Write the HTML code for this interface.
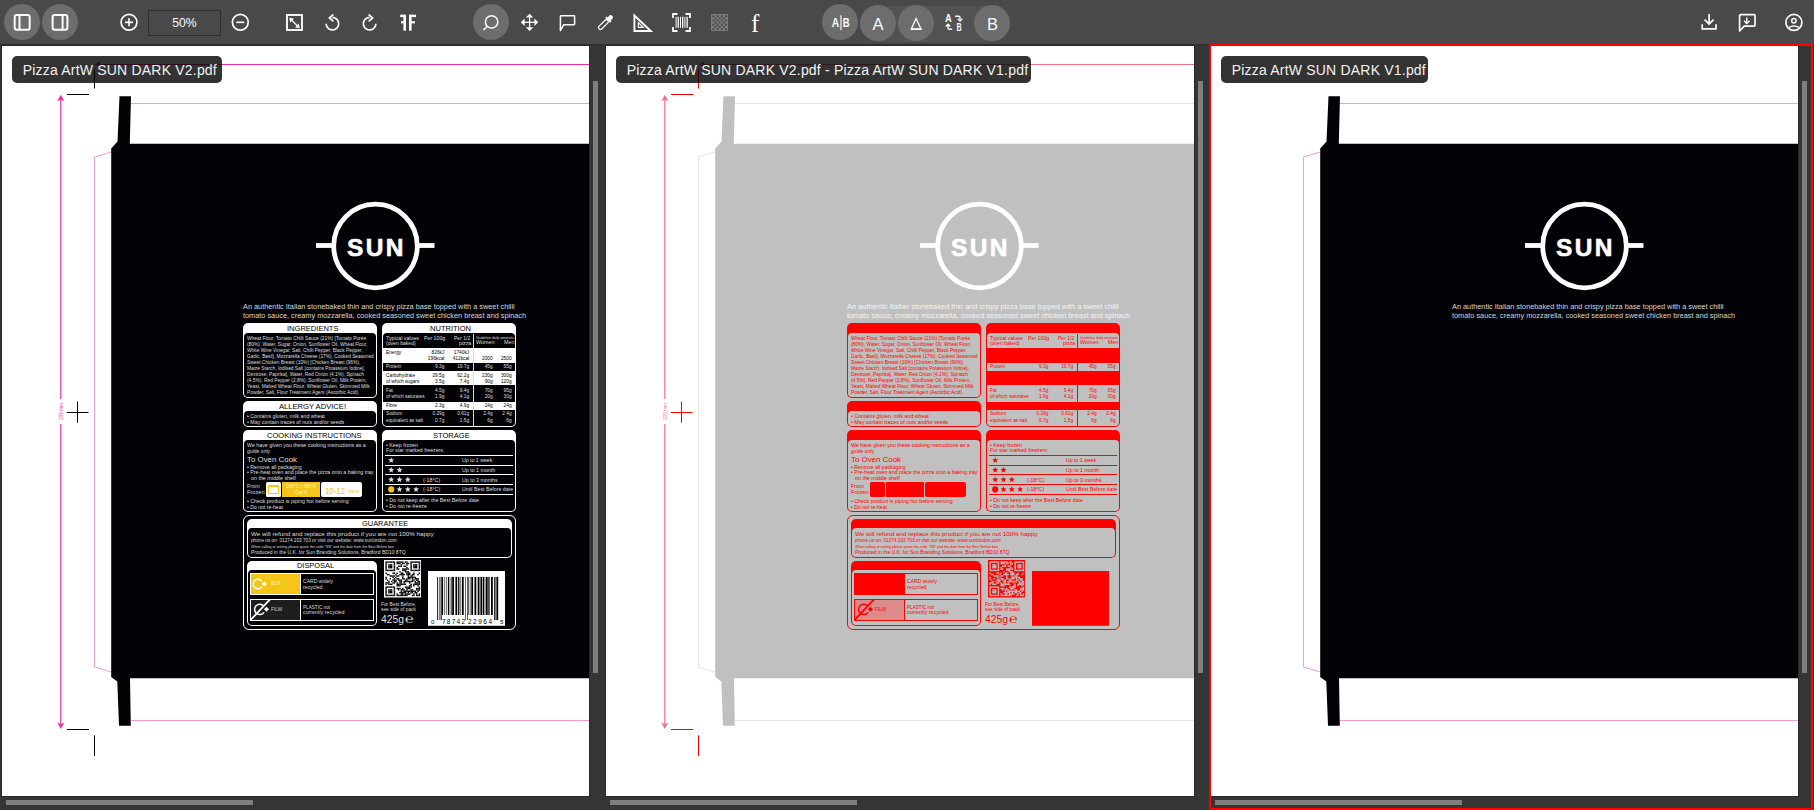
<!DOCTYPE html><html><head><meta charset="utf-8"><style>
*{box-sizing:border-box}
html,body{margin:0;padding:0;width:1814px;height:810px;overflow:hidden;background:#353535;font-family:"Liberation Sans",sans-serif}
div,span,svg{position:absolute}
.t{white-space:nowrap;display:block}
.pg{left:0;top:0}
.panel{background:#fff;overflow:hidden}
.inner{left:-2px;top:-46px;width:620px;height:850px}
.lbl{background:rgba(0,0,0,0.8);border-radius:5px;color:#fff}

</style></head><body>
<svg style="left:0;top:0" width="1814" height="44" viewBox="0 0 1814 44"><rect width="1814" height="44" fill="#494949"/><g fill="#6d6d6d"><circle cx="22" cy="22" r="18"/><circle cx="60" cy="22" r="18"/><circle cx="491" cy="22" r="18"/></g><rect x="860" y="6" width="149.5" height="36" rx="18" fill="#525252"/><g fill="#6d6d6d"><circle cx="840" cy="22" r="18"/><circle cx="878" cy="23" r="18"/><circle cx="916" cy="23" r="18"/><circle cx="992" cy="23" r="18"/></g><g fill="none" stroke="#fbfbfb" stroke-width="2" stroke-linecap="butt"><rect x="14.7" y="15" width="15" height="14.8" rx="2.2"/><line x1="19.5" y1="15" x2="19.5" y2="30"/><rect x="52.6" y="15" width="14.8" height="14.8" rx="2.2"/><line x1="62.6" y1="15" x2="62.6" y2="30"/></g><g fill="none" stroke="#fbfbfb" stroke-width="1.7"><circle cx="129" cy="22.3" r="7.9"/><line x1="125" y1="22.3" x2="133" y2="22.3"/><line x1="129" y1="18.3" x2="129" y2="26.3"/><circle cx="240.3" cy="22.3" r="7.9"/><line x1="236.3" y1="22.3" x2="244.3" y2="22.3"/><rect x="287" y="15" width="15" height="15" stroke-width="1.9"/><line x1="290.5" y1="19" x2="298.5" y2="27" stroke-width="1.4"/></g><g fill="#fbfbfb"><polygon points="289.3,17.8 294,18.6 290.1,22.5"/><polygon points="299.7,28.2 295,27.4 298.9,23.5"/></g><g fill="none" stroke="#fbfbfb" stroke-width="1.7" stroke-linecap="butt"><polyline points="332.40,17.50 333.13,17.54 333.85,17.67 334.55,17.88 335.21,18.18 335.84,18.54 336.43,18.99 336.95,19.49 337.42,20.06 337.81,20.67 338.13,21.33 338.37,22.02 338.52,22.73 338.60,23.46 338.58,24.19 338.48,24.91 338.30,25.62 338.03,26.30 337.69,26.94 337.27,27.54 336.78,28.08 336.24,28.57 335.64,28.99 335.00,29.33 334.32,29.60 333.61,29.78 332.89,29.88 332.16,29.90 331.43,29.82 330.72,29.67 330.03,29.43 329.37,29.11 328.76,28.72 328.19,28.25 327.69,27.73 327.24,27.14 326.88,26.51 326.58,25.85 326.37,25.15 326.24,24.43 326.20,23.70"/><polyline points="333.4,14.5 329.4,17.9 333.4,21.4" stroke-linejoin="miter"/><polyline points="369.60,17.50 368.87,17.54 368.15,17.67 367.45,17.88 366.79,18.18 366.16,18.54 365.57,18.99 365.05,19.49 364.58,20.06 364.19,20.67 363.87,21.33 363.63,22.02 363.48,22.73 363.40,23.46 363.42,24.19 363.52,24.91 363.70,25.62 363.97,26.30 364.31,26.94 364.73,27.54 365.22,28.08 365.76,28.57 366.36,28.99 367.00,29.33 367.68,29.60 368.39,29.78 369.11,29.88 369.84,29.90 370.57,29.82 371.28,29.67 371.97,29.43 372.63,29.11 373.24,28.72 373.81,28.25 374.31,27.73 374.76,27.14 375.12,26.51 375.42,25.85 375.63,25.15 375.76,24.43 375.80,23.70"/><polyline points="368.6,14.5 372.6,17.9 368.6,21.4" stroke-linejoin="miter"/></g><g fill="#fbfbfb"><rect x="403.4" y="14.7" width="2.6" height="16"/><rect x="400.2" y="14.7" width="5" height="2.4"/><rect x="401" y="21.2" width="4" height="2.2"/><rect x="409" y="14.7" width="2.6" height="16"/><rect x="409" y="14.7" width="7" height="2.4"/><rect x="409" y="21.2" width="6" height="2.2"/></g><rect x="148.5" y="10.5" width="72" height="25" fill="none" stroke="#2f2f2f" stroke-width="1"/><text x="184.5" y="26.6" font-family="Liberation Sans" font-size="12.2" fill="#fbfbfb" text-anchor="middle">50%</text><g fill="none" stroke="#fbfbfb" stroke-width="1.5"><circle cx="491.6" cy="21.9" r="6.2"/><line x1="487.2" y1="26.5" x2="483.4" y2="30"/></g><g stroke="#fbfbfb" stroke-width="1.3"><line x1="522" y1="22.3" x2="537" y2="22.3"/><line x1="529.6" y1="15" x2="529.6" y2="30"/></g><g fill="#fbfbfb"><polygon points="529.6,13.8 533.4,17.6 525.8,17.6"/><polygon points="529.6,31 533.4,27.2 525.8,27.2"/><polygon points="520.8,22.3 524.6,18.5 524.6,26.1"/><polygon points="538.2,22.3 534.4,18.5 534.4,26.1"/></g><path d="M560.4,30.6 L560.4,16.5 Q560.4,15.8 561.1,15.8 L574,15.8 Q574.6,15.8 574.6,16.5 L574.6,24 Q574.6,24.7 574,24.7 L563.8,24.7 Z" fill="none" stroke="#fbfbfb" stroke-width="1.5" stroke-linejoin="round"/><g transform="translate(605.5,22.5) rotate(45)"><rect x="-1.9" y="-3" width="3.8" height="12" rx="1.6" fill="none" stroke="#fbfbfb" stroke-width="1.3"/><rect x="-3.4" y="-5.2" width="6.8" height="2.2" fill="#fbfbfb"/><rect x="-2.3" y="-9.5" width="4.6" height="5" rx="2.2" fill="#fbfbfb"/></g><g fill="none" stroke="#fbfbfb" stroke-width="1.9" stroke-linejoin="miter"><polygon points="634.4,15.5 634.4,31 650.8,31"/><polygon points="638.4,22.6 638.4,27.4 643.2,27.4" stroke-width="1.2"/></g><g fill="none" stroke="#fbfbfb" stroke-width="1.8"><polyline points="673,18 673,14 677.5,14"/><polyline points="685.5,14 690,14 690,18"/><polyline points="673,27 673,31 677.5,31"/><polyline points="685.5,31 690,31 690,27"/></g><g fill="#fbfbfb"><rect x="675.6" y="16.8" width="1" height="11"/><rect x="677.6" y="16.8" width="1.3" height="11"/><rect x="680" y="16.8" width="1" height="11"/><rect x="682" y="16.8" width="1.3" height="11"/><rect x="684.4" y="16.8" width="1" height="11"/><rect x="686.5" y="16.8" width="1.3" height="11"/></g><rect x="711" y="14" width="17" height="17" fill="#7b7b7b"/><g fill="#4a4a4a"><rect x="712.30" y="15.30" width="2.1" height="2.1" rx="0.8"/><rect x="716.50" y="15.30" width="2.1" height="2.1" rx="0.8"/><rect x="720.70" y="15.30" width="2.1" height="2.1" rx="0.8"/><rect x="724.90" y="15.30" width="2.1" height="2.1" rx="0.8"/><rect x="714.40" y="17.40" width="2.1" height="2.1" rx="0.8"/><rect x="718.60" y="17.40" width="2.1" height="2.1" rx="0.8"/><rect x="722.80" y="17.40" width="2.1" height="2.1" rx="0.8"/><rect x="712.30" y="19.50" width="2.1" height="2.1" rx="0.8"/><rect x="716.50" y="19.50" width="2.1" height="2.1" rx="0.8"/><rect x="720.70" y="19.50" width="2.1" height="2.1" rx="0.8"/><rect x="724.90" y="19.50" width="2.1" height="2.1" rx="0.8"/><rect x="714.40" y="21.60" width="2.1" height="2.1" rx="0.8"/><rect x="718.60" y="21.60" width="2.1" height="2.1" rx="0.8"/><rect x="722.80" y="21.60" width="2.1" height="2.1" rx="0.8"/><rect x="712.30" y="23.70" width="2.1" height="2.1" rx="0.8"/><rect x="716.50" y="23.70" width="2.1" height="2.1" rx="0.8"/><rect x="720.70" y="23.70" width="2.1" height="2.1" rx="0.8"/><rect x="724.90" y="23.70" width="2.1" height="2.1" rx="0.8"/><rect x="714.40" y="25.80" width="2.1" height="2.1" rx="0.8"/><rect x="718.60" y="25.80" width="2.1" height="2.1" rx="0.8"/><rect x="722.80" y="25.80" width="2.1" height="2.1" rx="0.8"/><rect x="712.30" y="27.90" width="2.1" height="2.1" rx="0.8"/><rect x="716.50" y="27.90" width="2.1" height="2.1" rx="0.8"/><rect x="720.70" y="27.90" width="2.1" height="2.1" rx="0.8"/><rect x="724.90" y="27.90" width="2.1" height="2.1" rx="0.8"/></g><text x="751" y="31.5" font-family="Liberation Serif" font-size="25" fill="#fbfbfb">f</text><text x="0" y="0" transform="translate(831.8,27.2) scale(0.82,1)" font-family="Liberation Sans" font-size="12.6" font-weight="bold" fill="#fbfbfb">A</text><rect x="840.4" y="15.2" width="1.1" height="15" fill="#fbfbfb"/><text x="0" y="0" transform="translate(842.8,27.2) scale(0.75,1)" font-family="Liberation Sans" font-size="12.6" font-weight="bold" fill="#fbfbfb">B</text><text x="878" y="29.8" font-family="Liberation Sans" font-size="16.5" fill="#fbfbfb" text-anchor="middle">A</text><polygon points="916.1,18.6 921,29.1 911.2,29.1" fill="none" stroke="#fbfbfb" stroke-width="1.3"/><line x1="911" y1="29.1" x2="921.3" y2="29.1" stroke="#fbfbfb" stroke-width="1.6"/><text x="992.5" y="29.8" font-family="Liberation Sans" font-size="16.5" fill="#fbfbfb" text-anchor="middle">B</text><text x="0" y="0" transform="translate(945,21.9) scale(0.85,1)" font-family="Liberation Sans" font-size="11" font-weight="bold" fill="#fbfbfb">A</text><text x="0" y="0" transform="translate(956.4,31) scale(0.72,1)" font-family="Liberation Sans" font-size="10" font-weight="bold" fill="#fbfbfb">B</text><g fill="none" stroke="#fbfbfb" stroke-width="1.4"><path d="M955,16.2 L958.8,16.2 Q960,16.2 960,17.5 L960,19.5"/><path d="M952.2,29.2 L949.2,29.2 Q948,29.2 948,28 L948,26"/></g><g fill="none" stroke="#fbfbfb" stroke-width="1.4"><polyline points="957.7,18.8 960,21.1 962.3,18.8"/><polyline points="945.7,26.5 948,24.2 950.3,26.5"/></g><g fill="none" stroke="#fbfbfb" stroke-width="1.7"><polyline points="1702.2,24.3 1702.2,28.8 1716,28.8 1716,24.3"/><line x1="1709.1" y1="14" x2="1709.1" y2="24"/><polyline points="1704.6,19.6 1709.1,24.1 1713.6,19.6"/><path d="M1739.6,31 L1739.6,15.5 Q1739.6,14.6 1740.5,14.6 L1754.2,14.6 Q1755,14.6 1755,15.5 L1755,25.2 Q1755,26.1 1754.2,26.1 L1744.2,26.1 Z" stroke-linejoin="round"/><line x1="1746.8" y1="17.6" x2="1746.8" y2="23.4" stroke-width="1.4"/><polyline points="1744,20.8 1746.8,23.6 1749.6,20.8" stroke-width="1.4"/><circle cx="1793.9" cy="22.4" r="8"/><circle cx="1793.9" cy="20.8" r="2.2" stroke-width="1.5"/><path d="M1789,27.4 Q1793.9,24.5 1798.8,27.4" stroke-width="1.5"/></g></svg>
<div style="left:0.00px;top:44.00px;width:1814.00px;height:1.00px;background:#2f2f2f"></div>
<div class="panel" style="left:2px;top:46px;width:587px;height:750px;box-shadow:0 0 0 1px #2a2a2a">
<div class="inner">
<svg class="pg" width="620" height="800" viewBox="0 0 620 800"><g fill="none" stroke="#f39ad3" stroke-width="1"><polyline points="111.3,152 94.5,157 94.5,667 111.3,672"/><line x1="131" y1="103.5" x2="620" y2="103.5"/><line x1="130.5" y1="720.5" x2="620" y2="720.5"/></g><polygon fill="#020207" points="119.5,96.3 131,96.3 129.8,143.8 620,143.8 620,678.2 130,678.2 130.8,725.8 119,725.8 117.3,681.5 111.2,677 111.2,148.5 117.5,141.5"/><g stroke="#f22e9e" stroke-width="1.2" fill="none"><line x1="97" y1="64.5" x2="620" y2="64.5"/><line x1="60.8" y1="98" x2="60.8" y2="399"/><line x1="60.8" y1="424" x2="60.8" y2="725"/></g><g fill="#f22e9e"><polygon points="60.8,94.8 57.2,101.2 60.8,99.6 64.4,101.2"/><polygon points="60.8,729 57.2,722.6 60.8,724.2 64.4,722.6"/><polygon points="94.5,64.5 100,61.5 100,67.5"/></g><text x="0" y="0" transform="translate(63,411.5) rotate(-90)" font-family="Liberation Sans" font-size="4.5" fill="#f22e9e" text-anchor="middle">226 mm</text><g stroke="#000" stroke-width="1.05" fill="none"><line x1="67" y1="94.5" x2="89" y2="94.5"/><line x1="94.5" y1="69.5" x2="94.5" y2="88.5"/><line x1="67" y1="729.5" x2="89" y2="729.5"/><line x1="94.5" y1="735.3" x2="94.5" y2="756"/><line x1="67" y1="412.5" x2="88.5" y2="412.5"/><line x1="77.5" y1="401.5" x2="77.5" y2="422.8"/></g><g stroke="#fff" fill="none" stroke-width="4.8"><circle cx="375.5" cy="246" r="41.8"/><line x1="316" y1="245.5" x2="333.5" y2="245.5"/><line x1="417.5" y1="245.5" x2="434.5" y2="245.5"/></g></svg><div style="left:243.00px;top:323.30px;width:134.00px;height:74.50px;background:#fff;border-radius:5px"></div><div style="left:244.10px;top:333.40px;width:131.80px;height:63.30px;background:#020207;border-radius:4px"></div><span class="t" style="left:286.50px;top:325.03px;font-size:8px;line-height:8px;color:#000;transform:scaleX(0.9420);transform-origin:0 0;">INGREDIENTS</span><span class="t" style="left:247.00px;top:335.80px;font-size:5.2px;line-height:5.2px;color:#dedede;transform:scaleX(0.9375);transform-origin:0 0;">Wheat Flour, Tomato Chilli Sauce (21%) [Tomato Purée</span><span class="t" style="left:247.00px;top:341.79px;font-size:5.2px;line-height:5.2px;color:#dedede;transform:scaleX(0.9316);transform-origin:0 0;">(80%), Water, Sugar, Onion, Sunflower Oil, Wheat Flour,</span><span class="t" style="left:247.00px;top:347.78px;font-size:5.2px;line-height:5.2px;color:#dedede;transform:scaleX(0.9311);transform-origin:0 0;">White Wine Vinegar, Salt, Chilli Pepper, Black Pepper,</span><span class="t" style="left:247.00px;top:353.77px;font-size:5.2px;line-height:5.2px;color:#dedede;transform:scaleX(0.9232);transform-origin:0 0;">Garlic, Basil], Mozzarella Cheese (17%), Cooked Seasoned</span><span class="t" style="left:247.00px;top:359.76px;font-size:5.2px;line-height:5.2px;color:#dedede;transform:scaleX(0.9351);transform-origin:0 0;">Sweet Chicken Breast (10%) [Chicken Breast (96%),</span><span class="t" style="left:247.00px;top:365.75px;font-size:5.2px;line-height:5.2px;color:#dedede;transform:scaleX(0.9324);transform-origin:0 0;">Maize Starch, Iodised Salt [contains Potassium Iodine],</span><span class="t" style="left:247.00px;top:371.74px;font-size:5.2px;line-height:5.2px;color:#dedede;transform:scaleX(0.9358);transform-origin:0 0;">Dextrose, Paprika], Water, Red Onion (4.1%), Spinach</span><span class="t" style="left:247.00px;top:377.73px;font-size:5.2px;line-height:5.2px;color:#dedede;transform:scaleX(0.9373);transform-origin:0 0;">(4.5%), Red Pepper (2.8%), Sunflower Oil, Milk Protein,</span><span class="t" style="left:247.00px;top:383.72px;font-size:5.2px;line-height:5.2px;color:#dedede;transform:scaleX(0.9409);transform-origin:0 0;">Yeast, Malted Wheat Flour, Wheat Gluten, Skimmed Milk</span><span class="t" style="left:247.00px;top:389.71px;font-size:5.2px;line-height:5.2px;color:#dedede;transform:scaleX(0.9307);transform-origin:0 0;">Powder, Salt, Flour Treatment Agent (Ascorbic Acid).</span><div style="left:243.00px;top:401.30px;width:134.00px;height:25.70px;background:#fff;border-radius:5px"></div><div style="left:244.10px;top:411.00px;width:131.80px;height:14.90px;background:#020207;border-radius:4px"></div><span class="t" style="left:279.00px;top:402.53px;font-size:8px;line-height:8px;color:#000;transform:scaleX(0.9497);transform-origin:0 0;">ALLERGY ADVICE!</span><span class="t" style="left:247.00px;top:413.70px;font-size:5.2px;line-height:5.2px;color:#dedede;transform:scaleX(1.0134);transform-origin:0 0;">• Contains gluten, milk and wheat</span><span class="t" style="left:247.00px;top:419.60px;font-size:5.2px;line-height:5.2px;color:#dedede;transform:scaleX(1.0213);transform-origin:0 0;">• May contain traces of nuts and/or seeds</span><div style="left:381.80px;top:323.30px;width:134.20px;height:103.70px;background:#fff;border-radius:5px"></div><div style="left:382.90px;top:333.40px;width:132.00px;height:92.50px;background:#020207;border-radius:4px"></div><span class="t" style="left:429.70px;top:325.03px;font-size:8px;line-height:8px;color:#000;transform:scaleX(0.9414);transform-origin:0 0;">NUTRITION</span><div style="left:382.90px;top:347.80px;width:132.00px;height:14.80px;background:#fff"></div><div style="left:382.90px;top:371.00px;width:132.00px;height:14.30px;background:#fff"></div><div style="left:382.90px;top:402.00px;width:132.00px;height:8.00px;background:#fff"></div><div style="left:473.20px;top:334.00px;width:0.90px;height:92.00px;background:#d8dcc0"></div><span class="t" style="left:386.00px;top:336.54px;font-size:4.8px;line-height:4.8px;color:#dedede;transform:scaleX(1.0947);transform-origin:0 0;">Typical values</span><span class="t" style="left:386.00px;top:341.74px;font-size:4.8px;line-height:4.8px;color:#dedede;transform:scaleX(1.0602);transform-origin:0 0;">(oven baked)</span><span class="t" style="left:423.60px;top:336.54px;font-size:4.8px;line-height:4.8px;color:#dedede;transform:scaleX(1.0883);transform-origin:0 0;">Per 100g</span><span class="t" style="left:453.70px;top:336.54px;font-size:4.8px;line-height:4.8px;color:#dedede;transform:scaleX(1.0533);transform-origin:0 0;">Per 1/2</span><span class="t" style="left:458.50px;top:341.74px;font-size:4.8px;line-height:4.8px;color:#dedede;transform:scaleX(1.0977);transform-origin:0 0;">pizza</span><span class="t" style="left:476.40px;top:337.26px;font-size:3px;line-height:3px;color:#dedede;transform:scaleX(1.1869);transform-origin:0 0;">Guideline daily amounts</span><span class="t" style="left:476.40px;top:340.54px;font-size:4.8px;line-height:4.8px;color:#dedede;transform:scaleX(1.1186);transform-origin:0 0;">Women</span><span class="t" style="left:503.60px;top:340.54px;font-size:4.8px;line-height:4.8px;color:#dedede;transform:scaleX(1.1139);transform-origin:0 0;">Men</span><span class="t" style="left:386.00px;top:350.94px;font-size:4.8px;line-height:4.8px;color:#000;">Energy</span><span class="t" style="left:431.59px;top:350.94px;font-size:4.8px;line-height:4.8px;color:#000;">826kJ</span><span class="t" style="left:453.72px;top:350.94px;font-size:4.8px;line-height:4.8px;color:#000;">1740kJ</span><span class="t" style="left:427.86px;top:356.54px;font-size:4.8px;line-height:4.8px;color:#000;">196kcal</span><span class="t" style="left:452.66px;top:356.54px;font-size:4.8px;line-height:4.8px;color:#000;">412kcal</span><span class="t" style="left:482.02px;top:356.54px;font-size:4.8px;line-height:4.8px;color:#000;">2000</span><span class="t" style="left:500.92px;top:356.54px;font-size:4.8px;line-height:4.8px;color:#000;">2500</span><span class="t" style="left:386.00px;top:365.34px;font-size:4.8px;line-height:4.8px;color:#dedede;">Protein</span><span class="t" style="left:435.06px;top:365.34px;font-size:4.8px;line-height:4.8px;color:#dedede;">9.3g</span><span class="t" style="left:457.19px;top:365.34px;font-size:4.8px;line-height:4.8px;color:#dedede;">19.7g</span><span class="t" style="left:484.69px;top:365.34px;font-size:4.8px;line-height:4.8px;color:#dedede;">45g</span><span class="t" style="left:503.59px;top:365.34px;font-size:4.8px;line-height:4.8px;color:#dedede;">55g</span><span class="t" style="left:386.00px;top:374.04px;font-size:4.8px;line-height:4.8px;color:#000;">Carbohydrate</span><span class="t" style="left:432.39px;top:374.04px;font-size:4.8px;line-height:4.8px;color:#000;">29.5g</span><span class="t" style="left:457.19px;top:374.04px;font-size:4.8px;line-height:4.8px;color:#000;">62.2g</span><span class="t" style="left:482.02px;top:374.04px;font-size:4.8px;line-height:4.8px;color:#000;">230g</span><span class="t" style="left:500.92px;top:374.04px;font-size:4.8px;line-height:4.8px;color:#000;">300g</span><span class="t" style="left:386.00px;top:379.74px;font-size:4.8px;line-height:4.8px;color:#000;">of which sugars</span><span class="t" style="left:435.06px;top:379.74px;font-size:4.8px;line-height:4.8px;color:#000;">3.5g</span><span class="t" style="left:459.86px;top:379.74px;font-size:4.8px;line-height:4.8px;color:#000;">7.4g</span><span class="t" style="left:484.69px;top:379.74px;font-size:4.8px;line-height:4.8px;color:#000;">90g</span><span class="t" style="left:500.92px;top:379.74px;font-size:4.8px;line-height:4.8px;color:#000;">120g</span><span class="t" style="left:386.00px;top:389.24px;font-size:4.8px;line-height:4.8px;color:#dedede;">Fat</span><span class="t" style="left:435.06px;top:389.24px;font-size:4.8px;line-height:4.8px;color:#dedede;">4.5g</span><span class="t" style="left:459.86px;top:389.24px;font-size:4.8px;line-height:4.8px;color:#dedede;">9.4g</span><span class="t" style="left:484.69px;top:389.24px;font-size:4.8px;line-height:4.8px;color:#dedede;">70g</span><span class="t" style="left:503.59px;top:389.24px;font-size:4.8px;line-height:4.8px;color:#dedede;">95g</span><span class="t" style="left:386.00px;top:395.24px;font-size:4.8px;line-height:4.8px;color:#dedede;">of which saturates</span><span class="t" style="left:435.06px;top:395.24px;font-size:4.8px;line-height:4.8px;color:#dedede;">1.9g</span><span class="t" style="left:459.86px;top:395.24px;font-size:4.8px;line-height:4.8px;color:#dedede;">4.1g</span><span class="t" style="left:484.69px;top:395.24px;font-size:4.8px;line-height:4.8px;color:#dedede;">20g</span><span class="t" style="left:503.59px;top:395.24px;font-size:4.8px;line-height:4.8px;color:#dedede;">30g</span><span class="t" style="left:386.00px;top:404.14px;font-size:4.8px;line-height:4.8px;color:#000;">Fibre</span><span class="t" style="left:435.06px;top:404.14px;font-size:4.8px;line-height:4.8px;color:#000;">2.3g</span><span class="t" style="left:459.86px;top:404.14px;font-size:4.8px;line-height:4.8px;color:#000;">4.9g</span><span class="t" style="left:484.69px;top:404.14px;font-size:4.8px;line-height:4.8px;color:#000;">24g</span><span class="t" style="left:503.59px;top:404.14px;font-size:4.8px;line-height:4.8px;color:#000;">24g</span><span class="t" style="left:386.00px;top:412.44px;font-size:4.8px;line-height:4.8px;color:#dedede;">Sodium</span><span class="t" style="left:432.39px;top:412.44px;font-size:4.8px;line-height:4.8px;color:#dedede;">0.29g</span><span class="t" style="left:457.19px;top:412.44px;font-size:4.8px;line-height:4.8px;color:#dedede;">0.61g</span><span class="t" style="left:483.36px;top:412.44px;font-size:4.8px;line-height:4.8px;color:#dedede;">2.4g</span><span class="t" style="left:502.26px;top:412.44px;font-size:4.8px;line-height:4.8px;color:#dedede;">2.4g</span><span class="t" style="left:386.00px;top:418.54px;font-size:4.8px;line-height:4.8px;color:#dedede;">equivalent as salt</span><span class="t" style="left:435.06px;top:418.54px;font-size:4.8px;line-height:4.8px;color:#dedede;">0.7g</span><span class="t" style="left:459.86px;top:418.54px;font-size:4.8px;line-height:4.8px;color:#dedede;">1.5g</span><span class="t" style="left:487.36px;top:418.54px;font-size:4.8px;line-height:4.8px;color:#dedede;">6g</span><span class="t" style="left:506.26px;top:418.54px;font-size:4.8px;line-height:4.8px;color:#dedede;">6g</span><div style="left:243.00px;top:430.30px;width:134.00px;height:81.70px;background:#fff;border-radius:5px"></div><div style="left:244.10px;top:440.20px;width:131.80px;height:70.70px;background:#020207;border-radius:4px"></div><span class="t" style="left:266.70px;top:431.53px;font-size:8px;line-height:8px;color:#000;transform:scaleX(0.9460);transform-origin:0 0;">COOKING INSTRUCTIONS</span><span class="t" style="left:247.00px;top:443.00px;font-size:5.2px;line-height:5.2px;color:#dedede;transform:scaleX(1.0199);transform-origin:0 0;">We have given you these cooking instructions as a</span><span class="t" style="left:247.00px;top:448.90px;font-size:5.2px;line-height:5.2px;color:#dedede;transform:scaleX(0.9787);transform-origin:0 0;">guide only</span><span class="t" style="left:247.00px;top:456.47px;font-size:7.6px;line-height:7.6px;color:#dedede;transform:scaleX(1.0383);transform-origin:0 0;">To Oven Cook</span><span class="t" style="left:247.00px;top:464.60px;font-size:5.2px;line-height:5.2px;color:#dedede;transform:scaleX(1.0069);transform-origin:0 0;">• Remove all packaging</span><span class="t" style="left:247.00px;top:470.30px;font-size:5.2px;line-height:5.2px;color:#dedede;transform:scaleX(1.0147);transform-origin:0 0;">• Pre-heat oven and place the pizza onto a baking tray</span><span class="t" style="left:251.00px;top:476.10px;font-size:5.2px;line-height:5.2px;color:#dedede;transform:scaleX(1.0264);transform-origin:0 0;">on the middle shelf</span><span class="t" style="left:247.00px;top:484.10px;font-size:5.2px;line-height:5.2px;color:#dedede;transform:scaleX(1.0552);transform-origin:0 0;">From</span><span class="t" style="left:247.00px;top:490.10px;font-size:5.2px;line-height:5.2px;color:#dedede;transform:scaleX(1.0876);transform-origin:0 0;">Frozen</span><div style="left:266.00px;top:481.80px;width:14.60px;height:14.80px;background:#fff;border-radius:1.5px"></div><div style="left:267.60px;top:484.60px;width:11.60px;height:9.40px;border:1.7px solid #f6c51a;border-top-width:2.4px;border-radius:1px"></div><div style="left:282.00px;top:481.80px;width:37.70px;height:14.80px;background:#f6c51a"></div><span class="t" style="left:285.80px;top:485.21px;font-size:4.6px;line-height:4.6px;color:#fff3c0;transform:scaleX(1.0348);transform-origin:0 0;">200°C / 180°F</span><span class="t" style="left:294.80px;top:491.21px;font-size:4.6px;line-height:4.6px;color:#fff3c0;transform:scaleX(0.9778);transform-origin:0 0;">Gas 6</span><div style="left:321.30px;top:481.80px;width:40.80px;height:14.80px;background:#fff;border-radius:2px"></div><span class="t" style="left:324.50px;top:486.06px;font-size:9.5px;line-height:9.5px;color:#f6c51a;transform:scaleX(0.8232);transform-origin:0 0;">10-12</span><span class="t" style="left:347.50px;top:490.21px;font-size:4.6px;line-height:4.6px;color:#f6c51a;transform:scaleX(1.1326);transform-origin:0 0;">mins</span><span class="t" style="left:247.00px;top:498.90px;font-size:5.2px;line-height:5.2px;color:#dedede;transform:scaleX(1.0141);transform-origin:0 0;">• Check product is piping hot before serving</span><span class="t" style="left:247.00px;top:504.90px;font-size:5.2px;line-height:5.2px;color:#dedede;transform:scaleX(0.9862);transform-origin:0 0;">• Do not re-heat</span><div style="left:381.80px;top:430.30px;width:134.20px;height:81.70px;background:#fff;border-radius:5px"></div><div style="left:382.90px;top:440.20px;width:132.00px;height:70.70px;background:#020207;border-radius:4px"></div><span class="t" style="left:433.00px;top:431.53px;font-size:8px;line-height:8px;color:#000;transform:scaleX(0.9417);transform-origin:0 0;">STORAGE</span><span class="t" style="left:386.10px;top:443.00px;font-size:5.2px;line-height:5.2px;color:#dedede;transform:scaleX(1.0222);transform-origin:0 0;">• Keep frozen</span><span class="t" style="left:386.10px;top:448.40px;font-size:5.2px;line-height:5.2px;color:#dedede;">For star marked freezers:</span><div style="left:385.30px;top:454.90px;width:127.70px;height:0.90px;background:#fff"></div><div style="left:385.30px;top:464.50px;width:127.70px;height:0.90px;background:#fff"></div><div style="left:385.30px;top:474.40px;width:127.70px;height:0.90px;background:#fff"></div><div style="left:385.30px;top:484.00px;width:127.70px;height:0.90px;background:#fff"></div><div style="left:385.30px;top:494.00px;width:127.70px;height:0.90px;background:#fff"></div><svg style="left:380px;top:440px" width="40" height="60" viewBox="0 0 40 60"><g fill="#dedede"><polygon points="11.20,17.20 12.02,19.17 14.15,19.34 12.53,20.73 13.02,22.81 11.20,21.70 9.38,22.81 9.87,20.73 8.25,19.34 10.38,19.17"/><polygon points="11.20,26.90 12.02,28.87 14.15,29.04 12.53,30.43 13.02,32.51 11.20,31.39 9.38,32.51 9.87,30.43 8.25,29.04 10.38,28.87"/><polygon points="19.50,26.90 20.32,28.87 22.45,29.04 20.83,30.43 21.32,32.51 19.50,31.39 17.68,32.51 18.17,30.43 16.55,29.04 18.68,28.87"/><polygon points="11.20,36.60 12.02,38.57 14.15,38.74 12.53,40.13 13.02,42.21 11.20,41.09 9.38,42.21 9.87,40.13 8.25,38.74 10.38,38.57"/><polygon points="19.50,36.60 20.32,38.57 22.45,38.74 20.83,40.13 21.32,42.21 19.50,41.09 17.68,42.21 18.17,40.13 16.55,38.74 18.68,38.57"/><polygon points="27.80,36.60 28.62,38.57 30.75,38.74 29.13,40.13 29.62,42.21 27.80,41.09 25.98,42.21 26.47,40.13 24.85,38.74 26.98,38.57"/><polygon points="19.50,46.30 20.32,48.27 22.45,48.44 20.83,49.83 21.32,51.91 19.50,50.80 17.68,51.91 18.17,49.83 16.55,48.44 18.68,48.27"/><polygon points="27.80,46.30 28.62,48.27 30.75,48.44 29.13,49.83 29.62,51.91 27.80,50.80 25.98,51.91 26.47,49.83 24.85,48.44 26.98,48.27"/><polygon points="36.10,46.30 36.92,48.27 39.05,48.44 37.43,49.83 37.92,51.91 36.10,50.80 34.28,51.91 34.77,49.83 33.15,48.44 35.28,48.27"/></g><circle cx="11.199999999999989" cy="49.400000000000034" r="3.1" fill="#f6c51a"/></svg><span class="t" style="left:462.00px;top:458.20px;font-size:5.2px;line-height:5.2px;color:#dedede;">Up to 1 week</span><span class="t" style="left:462.00px;top:468.00px;font-size:5.2px;line-height:5.2px;color:#dedede;transform:scaleX(1.0196);transform-origin:0 0;">Up to 1 month</span><span class="t" style="left:422.80px;top:477.70px;font-size:5.2px;line-height:5.2px;color:#dedede;transform:scaleX(1.0231);transform-origin:0 0;">(-18°C)</span><span class="t" style="left:462.00px;top:477.70px;font-size:5.2px;line-height:5.2px;color:#dedede;transform:scaleX(1.0125);transform-origin:0 0;">Up to 3 months</span><span class="t" style="left:422.80px;top:487.30px;font-size:5.2px;line-height:5.2px;color:#dedede;transform:scaleX(1.0231);transform-origin:0 0;">(-18°C)</span><span class="t" style="left:462.00px;top:487.30px;font-size:5.2px;line-height:5.2px;color:#dedede;transform:scaleX(1.0122);transform-origin:0 0;">Until Best Before date</span><span class="t" style="left:386.10px;top:498.10px;font-size:5.2px;line-height:5.2px;color:#dedede;transform:scaleX(1.0130);transform-origin:0 0;">• Do not keep after the Best Before date</span><span class="t" style="left:386.10px;top:504.10px;font-size:5.2px;line-height:5.2px;color:#dedede;">• Do not re-freeze</span><div style="left:243.00px;top:515.00px;width:273.00px;height:115.00px;border:1.1px solid #fff;border-radius:6px"></div><div style="left:247.00px;top:518.80px;width:265.00px;height:39.20px;background:#fff;border-radius:5px"></div><div style="left:248.10px;top:528.40px;width:262.80px;height:28.50px;background:#020207;border-radius:4px"></div><span class="t" style="left:361.90px;top:519.73px;font-size:8px;line-height:8px;color:#000;transform:scaleX(0.9300);transform-origin:0 0;">GUARANTEE</span><span class="t" style="left:251.00px;top:531.15px;font-size:6.2px;line-height:6.2px;color:#dedede;transform:scaleX(1.0140);transform-origin:0 0;">We will refund and replace this product if you are not 100% happy</span><span class="t" style="left:251.00px;top:538.91px;font-size:4.6px;line-height:4.6px;color:#dedede;transform:scaleX(1.0219);transform-origin:0 0;">phone us on: 01274 203 703 or visit our website: www.sunlondon.com</span><span class="t" style="left:251.00px;top:545.53px;font-size:2.8px;line-height:2.8px;color:#dedede;transform:scaleX(1.2855);transform-origin:0 0;">When calling or writing please quote the code &quot;SN&quot; and the date from the Best Before box</span><span class="t" style="left:251.00px;top:550.40px;font-size:5.2px;line-height:5.2px;color:#dedede;transform:scaleX(0.9680);transform-origin:0 0;">Produced in the U.K. for Sun Branding Solutions, Bradford BD10 8TQ</span><div style="left:247.00px;top:560.80px;width:130.00px;height:65.20px;background:#fff;border-radius:5px"></div><div style="left:248.10px;top:570.40px;width:127.80px;height:54.50px;background:#020207;border-radius:4px"></div><span class="t" style="left:296.90px;top:562.43px;font-size:8px;line-height:8px;color:#000;transform:scaleX(0.9246);transform-origin:0 0;">DISPOSAL</span><div style="left:249.90px;top:573.00px;width:123.90px;height:21.70px;border:1.1px solid #fff;border-radius:0px"></div><div style="left:250.50px;top:573.60px;width:50.40px;height:20.50px;background:#f6c51a"></div><div style="left:300.40px;top:573.60px;width:1.00px;height:20.50px;background:#fff"></div><div style="left:249.90px;top:599.20px;width:123.90px;height:21.40px;border:1.1px solid #fff;border-radius:0px"></div><div style="left:250.50px;top:599.80px;width:50.40px;height:20.20px;background:#1e1e1e"></div><div style="left:300.40px;top:599.80px;width:1.00px;height:20.20px;background:#fff"></div><svg style="left:250px;top:573px" width="52" height="48" viewBox="0 0 52 48"><path d="M11.68,7.91 A4.8,4.8 0 1 0 11.93,13.75" fill="none" stroke="#fff" stroke-width="1.5"/><rect x="12.50" y="9.10" width="3.6" height="3.6" transform="rotate(45 14.30 10.90)" fill="#fff"/><path d="M13.78,33.06 A5.2,5.2 0 1 0 14.06,39.38" fill="none" stroke="#fff" stroke-width="1.5"/><rect x="14.70" y="34.50" width="3.6" height="3.6" transform="rotate(45 16.50 36.30)" fill="#fff"/><line x1="0.6" y1="47" x2="20" y2="26.3" stroke="#fff" stroke-width="1.8"/></svg><span class="t" style="left:271.00px;top:582.21px;font-size:4.6px;line-height:4.6px;color:#fff3c0;transform:scaleX(0.9779);transform-origin:0 0;">BOX</span><span class="t" style="left:271.00px;top:608.21px;font-size:4.6px;line-height:4.6px;color:#d0d0d0;transform:scaleX(1.0499);transform-origin:0 0;">FILM</span><span class="t" style="left:303.00px;top:579.27px;font-size:5px;line-height:5px;color:#dedede;transform:scaleX(1.0186);transform-origin:0 0;">CARD widely</span><span class="t" style="left:303.00px;top:584.87px;font-size:5px;line-height:5px;color:#dedede;transform:scaleX(1.0474);transform-origin:0 0;">recycled</span><span class="t" style="left:303.00px;top:604.87px;font-size:5px;line-height:5px;color:#dedede;transform:scaleX(0.9253);transform-origin:0 0;">PLASTIC not</span><span class="t" style="left:303.00px;top:610.47px;font-size:5px;line-height:5px;color:#dedede;transform:scaleX(1.0593);transform-origin:0 0;">currently recycled</span><svg style="left:383.7px;top:560.4px" width="37.5" height="37.5" viewBox="0 0 37.5 37.5"><rect width="37.5" height="37.5" fill="#fff"/><g fill="#000"><rect x="1.39" y="1.39" width="1.44" height="1.44"/><rect x="2.78" y="1.39" width="1.44" height="1.44"/><rect x="4.17" y="1.39" width="1.44" height="1.44"/><rect x="5.56" y="1.39" width="1.44" height="1.44"/><rect x="6.94" y="1.39" width="1.44" height="1.44"/><rect x="8.33" y="1.39" width="1.44" height="1.44"/><rect x="9.72" y="1.39" width="1.44" height="1.44"/><rect x="12.50" y="1.39" width="1.44" height="1.44"/><rect x="13.89" y="1.39" width="1.44" height="1.44"/><rect x="15.28" y="1.39" width="1.44" height="1.44"/><rect x="16.67" y="1.39" width="1.44" height="1.44"/><rect x="18.06" y="1.39" width="1.44" height="1.44"/><rect x="20.83" y="1.39" width="1.44" height="1.44"/><rect x="22.22" y="1.39" width="1.44" height="1.44"/><rect x="26.39" y="1.39" width="1.44" height="1.44"/><rect x="27.78" y="1.39" width="1.44" height="1.44"/><rect x="29.17" y="1.39" width="1.44" height="1.44"/><rect x="30.56" y="1.39" width="1.44" height="1.44"/><rect x="31.94" y="1.39" width="1.44" height="1.44"/><rect x="33.33" y="1.39" width="1.44" height="1.44"/><rect x="34.72" y="1.39" width="1.44" height="1.44"/><rect x="1.39" y="2.78" width="1.44" height="1.44"/><rect x="9.72" y="2.78" width="1.44" height="1.44"/><rect x="12.50" y="2.78" width="1.44" height="1.44"/><rect x="13.89" y="2.78" width="1.44" height="1.44"/><rect x="15.28" y="2.78" width="1.44" height="1.44"/><rect x="18.06" y="2.78" width="1.44" height="1.44"/><rect x="19.44" y="2.78" width="1.44" height="1.44"/><rect x="22.22" y="2.78" width="1.44" height="1.44"/><rect x="23.61" y="2.78" width="1.44" height="1.44"/><rect x="26.39" y="2.78" width="1.44" height="1.44"/><rect x="34.72" y="2.78" width="1.44" height="1.44"/><rect x="1.39" y="4.17" width="1.44" height="1.44"/><rect x="4.17" y="4.17" width="1.44" height="1.44"/><rect x="5.56" y="4.17" width="1.44" height="1.44"/><rect x="6.94" y="4.17" width="1.44" height="1.44"/><rect x="9.72" y="4.17" width="1.44" height="1.44"/><rect x="16.67" y="4.17" width="1.44" height="1.44"/><rect x="22.22" y="4.17" width="1.44" height="1.44"/><rect x="26.39" y="4.17" width="1.44" height="1.44"/><rect x="29.17" y="4.17" width="1.44" height="1.44"/><rect x="30.56" y="4.17" width="1.44" height="1.44"/><rect x="31.94" y="4.17" width="1.44" height="1.44"/><rect x="34.72" y="4.17" width="1.44" height="1.44"/><rect x="1.39" y="5.56" width="1.44" height="1.44"/><rect x="4.17" y="5.56" width="1.44" height="1.44"/><rect x="5.56" y="5.56" width="1.44" height="1.44"/><rect x="6.94" y="5.56" width="1.44" height="1.44"/><rect x="9.72" y="5.56" width="1.44" height="1.44"/><rect x="13.89" y="5.56" width="1.44" height="1.44"/><rect x="15.28" y="5.56" width="1.44" height="1.44"/><rect x="16.67" y="5.56" width="1.44" height="1.44"/><rect x="19.44" y="5.56" width="1.44" height="1.44"/><rect x="20.83" y="5.56" width="1.44" height="1.44"/><rect x="26.39" y="5.56" width="1.44" height="1.44"/><rect x="29.17" y="5.56" width="1.44" height="1.44"/><rect x="30.56" y="5.56" width="1.44" height="1.44"/><rect x="31.94" y="5.56" width="1.44" height="1.44"/><rect x="34.72" y="5.56" width="1.44" height="1.44"/><rect x="1.39" y="6.94" width="1.44" height="1.44"/><rect x="4.17" y="6.94" width="1.44" height="1.44"/><rect x="5.56" y="6.94" width="1.44" height="1.44"/><rect x="6.94" y="6.94" width="1.44" height="1.44"/><rect x="9.72" y="6.94" width="1.44" height="1.44"/><rect x="12.50" y="6.94" width="1.44" height="1.44"/><rect x="22.22" y="6.94" width="1.44" height="1.44"/><rect x="26.39" y="6.94" width="1.44" height="1.44"/><rect x="29.17" y="6.94" width="1.44" height="1.44"/><rect x="30.56" y="6.94" width="1.44" height="1.44"/><rect x="31.94" y="6.94" width="1.44" height="1.44"/><rect x="34.72" y="6.94" width="1.44" height="1.44"/><rect x="1.39" y="8.33" width="1.44" height="1.44"/><rect x="9.72" y="8.33" width="1.44" height="1.44"/><rect x="12.50" y="8.33" width="1.44" height="1.44"/><rect x="13.89" y="8.33" width="1.44" height="1.44"/><rect x="18.06" y="8.33" width="1.44" height="1.44"/><rect x="19.44" y="8.33" width="1.44" height="1.44"/><rect x="20.83" y="8.33" width="1.44" height="1.44"/><rect x="22.22" y="8.33" width="1.44" height="1.44"/><rect x="23.61" y="8.33" width="1.44" height="1.44"/><rect x="26.39" y="8.33" width="1.44" height="1.44"/><rect x="34.72" y="8.33" width="1.44" height="1.44"/><rect x="1.39" y="9.72" width="1.44" height="1.44"/><rect x="2.78" y="9.72" width="1.44" height="1.44"/><rect x="4.17" y="9.72" width="1.44" height="1.44"/><rect x="5.56" y="9.72" width="1.44" height="1.44"/><rect x="6.94" y="9.72" width="1.44" height="1.44"/><rect x="8.33" y="9.72" width="1.44" height="1.44"/><rect x="9.72" y="9.72" width="1.44" height="1.44"/><rect x="18.06" y="9.72" width="1.44" height="1.44"/><rect x="19.44" y="9.72" width="1.44" height="1.44"/><rect x="20.83" y="9.72" width="1.44" height="1.44"/><rect x="26.39" y="9.72" width="1.44" height="1.44"/><rect x="27.78" y="9.72" width="1.44" height="1.44"/><rect x="29.17" y="9.72" width="1.44" height="1.44"/><rect x="30.56" y="9.72" width="1.44" height="1.44"/><rect x="31.94" y="9.72" width="1.44" height="1.44"/><rect x="33.33" y="9.72" width="1.44" height="1.44"/><rect x="34.72" y="9.72" width="1.44" height="1.44"/><rect x="15.28" y="11.11" width="1.44" height="1.44"/><rect x="20.83" y="11.11" width="1.44" height="1.44"/><rect x="22.22" y="11.11" width="1.44" height="1.44"/><rect x="23.61" y="11.11" width="1.44" height="1.44"/><rect x="1.39" y="12.50" width="1.44" height="1.44"/><rect x="8.33" y="12.50" width="1.44" height="1.44"/><rect x="9.72" y="12.50" width="1.44" height="1.44"/><rect x="12.50" y="12.50" width="1.44" height="1.44"/><rect x="16.67" y="12.50" width="1.44" height="1.44"/><rect x="18.06" y="12.50" width="1.44" height="1.44"/><rect x="22.22" y="12.50" width="1.44" height="1.44"/><rect x="23.61" y="12.50" width="1.44" height="1.44"/><rect x="25.00" y="12.50" width="1.44" height="1.44"/><rect x="29.17" y="12.50" width="1.44" height="1.44"/><rect x="34.72" y="12.50" width="1.44" height="1.44"/><rect x="2.78" y="13.89" width="1.44" height="1.44"/><rect x="4.17" y="13.89" width="1.44" height="1.44"/><rect x="11.11" y="13.89" width="1.44" height="1.44"/><rect x="15.28" y="13.89" width="1.44" height="1.44"/><rect x="16.67" y="13.89" width="1.44" height="1.44"/><rect x="18.06" y="13.89" width="1.44" height="1.44"/><rect x="19.44" y="13.89" width="1.44" height="1.44"/><rect x="22.22" y="13.89" width="1.44" height="1.44"/><rect x="23.61" y="13.89" width="1.44" height="1.44"/><rect x="25.00" y="13.89" width="1.44" height="1.44"/><rect x="27.78" y="13.89" width="1.44" height="1.44"/><rect x="29.17" y="13.89" width="1.44" height="1.44"/><rect x="33.33" y="13.89" width="1.44" height="1.44"/><rect x="5.56" y="15.28" width="1.44" height="1.44"/><rect x="6.94" y="15.28" width="1.44" height="1.44"/><rect x="8.33" y="15.28" width="1.44" height="1.44"/><rect x="9.72" y="15.28" width="1.44" height="1.44"/><rect x="12.50" y="15.28" width="1.44" height="1.44"/><rect x="13.89" y="15.28" width="1.44" height="1.44"/><rect x="18.06" y="15.28" width="1.44" height="1.44"/><rect x="23.61" y="15.28" width="1.44" height="1.44"/><rect x="26.39" y="15.28" width="1.44" height="1.44"/><rect x="27.78" y="15.28" width="1.44" height="1.44"/><rect x="1.39" y="16.67" width="1.44" height="1.44"/><rect x="8.33" y="16.67" width="1.44" height="1.44"/><rect x="11.11" y="16.67" width="1.44" height="1.44"/><rect x="18.06" y="16.67" width="1.44" height="1.44"/><rect x="23.61" y="16.67" width="1.44" height="1.44"/><rect x="25.00" y="16.67" width="1.44" height="1.44"/><rect x="26.39" y="16.67" width="1.44" height="1.44"/><rect x="27.78" y="16.67" width="1.44" height="1.44"/><rect x="29.17" y="16.67" width="1.44" height="1.44"/><rect x="30.56" y="16.67" width="1.44" height="1.44"/><rect x="1.39" y="18.06" width="1.44" height="1.44"/><rect x="5.56" y="18.06" width="1.44" height="1.44"/><rect x="9.72" y="18.06" width="1.44" height="1.44"/><rect x="12.50" y="18.06" width="1.44" height="1.44"/><rect x="13.89" y="18.06" width="1.44" height="1.44"/><rect x="18.06" y="18.06" width="1.44" height="1.44"/><rect x="19.44" y="18.06" width="1.44" height="1.44"/><rect x="22.22" y="18.06" width="1.44" height="1.44"/><rect x="23.61" y="18.06" width="1.44" height="1.44"/><rect x="25.00" y="18.06" width="1.44" height="1.44"/><rect x="27.78" y="18.06" width="1.44" height="1.44"/><rect x="30.56" y="18.06" width="1.44" height="1.44"/><rect x="31.94" y="18.06" width="1.44" height="1.44"/><rect x="33.33" y="18.06" width="1.44" height="1.44"/><rect x="2.78" y="19.44" width="1.44" height="1.44"/><rect x="8.33" y="19.44" width="1.44" height="1.44"/><rect x="9.72" y="19.44" width="1.44" height="1.44"/><rect x="11.11" y="19.44" width="1.44" height="1.44"/><rect x="13.89" y="19.44" width="1.44" height="1.44"/><rect x="15.28" y="19.44" width="1.44" height="1.44"/><rect x="16.67" y="19.44" width="1.44" height="1.44"/><rect x="20.83" y="19.44" width="1.44" height="1.44"/><rect x="22.22" y="19.44" width="1.44" height="1.44"/><rect x="27.78" y="19.44" width="1.44" height="1.44"/><rect x="29.17" y="19.44" width="1.44" height="1.44"/><rect x="31.94" y="19.44" width="1.44" height="1.44"/><rect x="33.33" y="19.44" width="1.44" height="1.44"/><rect x="4.17" y="20.83" width="1.44" height="1.44"/><rect x="6.94" y="20.83" width="1.44" height="1.44"/><rect x="9.72" y="20.83" width="1.44" height="1.44"/><rect x="11.11" y="20.83" width="1.44" height="1.44"/><rect x="15.28" y="20.83" width="1.44" height="1.44"/><rect x="16.67" y="20.83" width="1.44" height="1.44"/><rect x="19.44" y="20.83" width="1.44" height="1.44"/><rect x="20.83" y="20.83" width="1.44" height="1.44"/><rect x="22.22" y="20.83" width="1.44" height="1.44"/><rect x="23.61" y="20.83" width="1.44" height="1.44"/><rect x="25.00" y="20.83" width="1.44" height="1.44"/><rect x="26.39" y="20.83" width="1.44" height="1.44"/><rect x="27.78" y="20.83" width="1.44" height="1.44"/><rect x="30.56" y="20.83" width="1.44" height="1.44"/><rect x="33.33" y="20.83" width="1.44" height="1.44"/><rect x="34.72" y="20.83" width="1.44" height="1.44"/><rect x="1.39" y="22.22" width="1.44" height="1.44"/><rect x="2.78" y="22.22" width="1.44" height="1.44"/><rect x="4.17" y="22.22" width="1.44" height="1.44"/><rect x="8.33" y="22.22" width="1.44" height="1.44"/><rect x="9.72" y="22.22" width="1.44" height="1.44"/><rect x="12.50" y="22.22" width="1.44" height="1.44"/><rect x="15.28" y="22.22" width="1.44" height="1.44"/><rect x="16.67" y="22.22" width="1.44" height="1.44"/><rect x="19.44" y="22.22" width="1.44" height="1.44"/><rect x="25.00" y="22.22" width="1.44" height="1.44"/><rect x="30.56" y="22.22" width="1.44" height="1.44"/><rect x="31.94" y="22.22" width="1.44" height="1.44"/><rect x="33.33" y="22.22" width="1.44" height="1.44"/><rect x="34.72" y="22.22" width="1.44" height="1.44"/><rect x="1.39" y="23.61" width="1.44" height="1.44"/><rect x="4.17" y="23.61" width="1.44" height="1.44"/><rect x="5.56" y="23.61" width="1.44" height="1.44"/><rect x="6.94" y="23.61" width="1.44" height="1.44"/><rect x="12.50" y="23.61" width="1.44" height="1.44"/><rect x="13.89" y="23.61" width="1.44" height="1.44"/><rect x="15.28" y="23.61" width="1.44" height="1.44"/><rect x="16.67" y="23.61" width="1.44" height="1.44"/><rect x="18.06" y="23.61" width="1.44" height="1.44"/><rect x="19.44" y="23.61" width="1.44" height="1.44"/><rect x="20.83" y="23.61" width="1.44" height="1.44"/><rect x="26.39" y="23.61" width="1.44" height="1.44"/><rect x="29.17" y="23.61" width="1.44" height="1.44"/><rect x="30.56" y="23.61" width="1.44" height="1.44"/><rect x="31.94" y="23.61" width="1.44" height="1.44"/><rect x="33.33" y="23.61" width="1.44" height="1.44"/><rect x="34.72" y="23.61" width="1.44" height="1.44"/><rect x="12.50" y="25.00" width="1.44" height="1.44"/><rect x="13.89" y="25.00" width="1.44" height="1.44"/><rect x="15.28" y="25.00" width="1.44" height="1.44"/><rect x="25.00" y="25.00" width="1.44" height="1.44"/><rect x="26.39" y="25.00" width="1.44" height="1.44"/><rect x="29.17" y="25.00" width="1.44" height="1.44"/><rect x="33.33" y="25.00" width="1.44" height="1.44"/><rect x="1.39" y="26.39" width="1.44" height="1.44"/><rect x="2.78" y="26.39" width="1.44" height="1.44"/><rect x="4.17" y="26.39" width="1.44" height="1.44"/><rect x="5.56" y="26.39" width="1.44" height="1.44"/><rect x="6.94" y="26.39" width="1.44" height="1.44"/><rect x="8.33" y="26.39" width="1.44" height="1.44"/><rect x="9.72" y="26.39" width="1.44" height="1.44"/><rect x="20.83" y="26.39" width="1.44" height="1.44"/><rect x="22.22" y="26.39" width="1.44" height="1.44"/><rect x="23.61" y="26.39" width="1.44" height="1.44"/><rect x="25.00" y="26.39" width="1.44" height="1.44"/><rect x="26.39" y="26.39" width="1.44" height="1.44"/><rect x="34.72" y="26.39" width="1.44" height="1.44"/><rect x="1.39" y="27.78" width="1.44" height="1.44"/><rect x="9.72" y="27.78" width="1.44" height="1.44"/><rect x="12.50" y="27.78" width="1.44" height="1.44"/><rect x="13.89" y="27.78" width="1.44" height="1.44"/><rect x="15.28" y="27.78" width="1.44" height="1.44"/><rect x="18.06" y="27.78" width="1.44" height="1.44"/><rect x="22.22" y="27.78" width="1.44" height="1.44"/><rect x="23.61" y="27.78" width="1.44" height="1.44"/><rect x="25.00" y="27.78" width="1.44" height="1.44"/><rect x="31.94" y="27.78" width="1.44" height="1.44"/><rect x="33.33" y="27.78" width="1.44" height="1.44"/><rect x="34.72" y="27.78" width="1.44" height="1.44"/><rect x="1.39" y="29.17" width="1.44" height="1.44"/><rect x="4.17" y="29.17" width="1.44" height="1.44"/><rect x="5.56" y="29.17" width="1.44" height="1.44"/><rect x="6.94" y="29.17" width="1.44" height="1.44"/><rect x="9.72" y="29.17" width="1.44" height="1.44"/><rect x="13.89" y="29.17" width="1.44" height="1.44"/><rect x="16.67" y="29.17" width="1.44" height="1.44"/><rect x="18.06" y="29.17" width="1.44" height="1.44"/><rect x="19.44" y="29.17" width="1.44" height="1.44"/><rect x="22.22" y="29.17" width="1.44" height="1.44"/><rect x="26.39" y="29.17" width="1.44" height="1.44"/><rect x="27.78" y="29.17" width="1.44" height="1.44"/><rect x="31.94" y="29.17" width="1.44" height="1.44"/><rect x="33.33" y="29.17" width="1.44" height="1.44"/><rect x="34.72" y="29.17" width="1.44" height="1.44"/><rect x="1.39" y="30.56" width="1.44" height="1.44"/><rect x="4.17" y="30.56" width="1.44" height="1.44"/><rect x="5.56" y="30.56" width="1.44" height="1.44"/><rect x="6.94" y="30.56" width="1.44" height="1.44"/><rect x="9.72" y="30.56" width="1.44" height="1.44"/><rect x="16.67" y="30.56" width="1.44" height="1.44"/><rect x="19.44" y="30.56" width="1.44" height="1.44"/><rect x="20.83" y="30.56" width="1.44" height="1.44"/><rect x="22.22" y="30.56" width="1.44" height="1.44"/><rect x="23.61" y="30.56" width="1.44" height="1.44"/><rect x="25.00" y="30.56" width="1.44" height="1.44"/><rect x="26.39" y="30.56" width="1.44" height="1.44"/><rect x="27.78" y="30.56" width="1.44" height="1.44"/><rect x="29.17" y="30.56" width="1.44" height="1.44"/><rect x="30.56" y="30.56" width="1.44" height="1.44"/><rect x="33.33" y="30.56" width="1.44" height="1.44"/><rect x="1.39" y="31.94" width="1.44" height="1.44"/><rect x="4.17" y="31.94" width="1.44" height="1.44"/><rect x="5.56" y="31.94" width="1.44" height="1.44"/><rect x="6.94" y="31.94" width="1.44" height="1.44"/><rect x="9.72" y="31.94" width="1.44" height="1.44"/><rect x="15.28" y="31.94" width="1.44" height="1.44"/><rect x="16.67" y="31.94" width="1.44" height="1.44"/><rect x="18.06" y="31.94" width="1.44" height="1.44"/><rect x="19.44" y="31.94" width="1.44" height="1.44"/><rect x="20.83" y="31.94" width="1.44" height="1.44"/><rect x="23.61" y="31.94" width="1.44" height="1.44"/><rect x="26.39" y="31.94" width="1.44" height="1.44"/><rect x="27.78" y="31.94" width="1.44" height="1.44"/><rect x="30.56" y="31.94" width="1.44" height="1.44"/><rect x="31.94" y="31.94" width="1.44" height="1.44"/><rect x="1.39" y="33.33" width="1.44" height="1.44"/><rect x="9.72" y="33.33" width="1.44" height="1.44"/><rect x="12.50" y="33.33" width="1.44" height="1.44"/><rect x="16.67" y="33.33" width="1.44" height="1.44"/><rect x="18.06" y="33.33" width="1.44" height="1.44"/><rect x="20.83" y="33.33" width="1.44" height="1.44"/><rect x="22.22" y="33.33" width="1.44" height="1.44"/><rect x="23.61" y="33.33" width="1.44" height="1.44"/><rect x="25.00" y="33.33" width="1.44" height="1.44"/><rect x="29.17" y="33.33" width="1.44" height="1.44"/><rect x="31.94" y="33.33" width="1.44" height="1.44"/><rect x="34.72" y="33.33" width="1.44" height="1.44"/><rect x="1.39" y="34.72" width="1.44" height="1.44"/><rect x="2.78" y="34.72" width="1.44" height="1.44"/><rect x="4.17" y="34.72" width="1.44" height="1.44"/><rect x="5.56" y="34.72" width="1.44" height="1.44"/><rect x="6.94" y="34.72" width="1.44" height="1.44"/><rect x="8.33" y="34.72" width="1.44" height="1.44"/><rect x="9.72" y="34.72" width="1.44" height="1.44"/><rect x="12.50" y="34.72" width="1.44" height="1.44"/><rect x="13.89" y="34.72" width="1.44" height="1.44"/><rect x="15.28" y="34.72" width="1.44" height="1.44"/><rect x="16.67" y="34.72" width="1.44" height="1.44"/><rect x="18.06" y="34.72" width="1.44" height="1.44"/><rect x="19.44" y="34.72" width="1.44" height="1.44"/><rect x="20.83" y="34.72" width="1.44" height="1.44"/><rect x="22.22" y="34.72" width="1.44" height="1.44"/><rect x="27.78" y="34.72" width="1.44" height="1.44"/><rect x="29.17" y="34.72" width="1.44" height="1.44"/><rect x="31.94" y="34.72" width="1.44" height="1.44"/><rect x="33.33" y="34.72" width="1.44" height="1.44"/><rect x="34.72" y="34.72" width="1.44" height="1.44"/></g></svg><span class="t" style="left:380.80px;top:602.51px;font-size:4.6px;line-height:4.6px;color:#dedede;transform:scaleX(1.0451);transform-origin:0 0;">For Best Before,</span><span class="t" style="left:380.80px;top:608.41px;font-size:4.6px;line-height:4.6px;color:#dedede;transform:scaleX(1.0529);transform-origin:0 0;">see side of pack</span><span class="t" style="left:380.80px;top:615.03px;font-size:10px;line-height:10px;color:#dedede;transform:scaleX(1.0340);transform-origin:0 0;">425g</span><span class="t" style="left:405.20px;top:613.12px;font-size:12.5px;line-height:12.5px;color:#dedede;transform:scaleX(1.1464);transform-origin:0 0;">℮</span><svg style="left:427.6px;top:571.2px" width="77.9" height="54.8" viewBox="0 0 77.9 54.8"><rect width="77.9" height="54.8" fill="#fff"/><g fill="#000"><rect x="9.20" y="5.9" width="0.9" height="43.2"/><rect x="11.50" y="5.9" width="0.9" height="43.2"/><rect x="13.30" y="5.9" width="1.8" height="43.2"/><rect x="16.50" y="5.9" width="0.6" height="43.2"/><rect x="18.50" y="5.9" width="0.6" height="43.2"/><rect x="20.00" y="5.9" width="1.3" height="43.2"/><rect x="22.70" y="5.9" width="0.9" height="43.2"/><rect x="24.20" y="5.9" width="1.8" height="43.2"/><rect x="27.40" y="5.9" width="1.8" height="43.2"/><rect x="30.10" y="5.9" width="0.9" height="43.2"/><rect x="31.60" y="5.9" width="0.9" height="43.2"/><rect x="33.90" y="5.9" width="1.8" height="43.2"/><rect x="37.10" y="5.9" width="0.6" height="43.2"/><rect x="39.10" y="5.9" width="0.6" height="43.2"/><rect x="40.30" y="5.9" width="0.6" height="43.2"/><rect x="41.80" y="5.9" width="0.6" height="43.2"/><rect x="43.30" y="5.9" width="1.8" height="43.2"/><rect x="46.50" y="5.9" width="1.8" height="43.2"/><rect x="49.70" y="5.9" width="1.8" height="43.2"/><rect x="52.40" y="5.9" width="1.8" height="43.2"/><rect x="54.80" y="5.9" width="1.3" height="43.2"/><rect x="56.70" y="5.9" width="0.6" height="43.2"/><rect x="57.90" y="5.9" width="1.8" height="43.2"/><rect x="60.30" y="5.9" width="1.3" height="43.2"/><rect x="63.00" y="5.9" width="1.8" height="43.2"/><rect x="66.20" y="5.9" width="1.3" height="43.2"/><rect x="68.40" y="5.9" width="1.8" height="43.2"/></g><rect x="14" y="44" width="23" height="7" fill="#fff"/><rect x="40" y="44" width="25" height="7" fill="#fff"/><text x="3" y="53.5" font-family="Liberation Sans" font-size="6" fill="#000">0</text><text x="14" y="53.5" font-family="Liberation Sans" font-size="6.5" fill="#000" textLength="23">78742</text><text x="40" y="53.5" font-family="Liberation Sans" font-size="6.5" fill="#000" textLength="24">22964</text><text x="72" y="53.5" font-family="Liberation Sans" font-size="6" fill="#000">5</text></svg><span class="t" style="left:347.00px;top:235.86px;font-size:24.5px;line-height:24.5px;color:#fff;font-weight:bold;letter-spacing:2.4px;-webkit-text-stroke:0.6px #fff;">SUN</span><span class="t" style="left:243.00px;top:302.69px;font-size:7.34px;line-height:7.34px;color:#d6d6d6;">An authentic Italian stonebaked thin and crispy pizza base topped with a sweet chilli</span><span class="t" style="left:243.00px;top:311.79px;font-size:7.34px;line-height:7.34px;color:#d6d6d6;">tomato sauce, creamy mozzarella, cooked seasoned sweet chicken breast and spinach</span>
</div>
<div class="lbl" style="left:10px;top:10px;width:210.0px;height:27px"></div>
<span class="t" style="left:20.70px;top:16.75px;font-size:14px;line-height:14px;color:#f2f2f2;letter-spacing:0.2px;">Pizza ArtW SUN DARK V2.pdf</span>
</div>
<div style="left:593.00px;top:81.00px;width:5.00px;height:592.00px;background:#7f7f7f"></div>
<div style="left:6.00px;top:800.00px;width:247.00px;height:5.00px;background:#7f7f7f"></div>
<div class="panel" style="left:606px;top:46px;width:588px;height:750px;box-shadow:0 0 0 1px #2a2a2a">
<div class="inner">
<svg class="pg" width="620" height="800" viewBox="0 0 620 800"><g fill="none" stroke="#e6e6e6" stroke-width="1"><polyline points="111.3,152 94.5,157 94.5,667 111.3,672"/><line x1="131" y1="103.5" x2="620" y2="103.5"/><line x1="130.5" y1="720.5" x2="620" y2="720.5"/></g><polygon fill="#c0c0c0" points="119.5,96.3 131,96.3 129.8,143.8 620,143.8 620,678.2 130,678.2 130.8,725.8 119,725.8 117.3,681.5 111.2,677 111.2,148.5 117.5,141.5"/><g stroke="#f27080" stroke-width="1.2" fill="none"><line x1="97" y1="64.5" x2="620" y2="64.5"/><line x1="60.8" y1="98" x2="60.8" y2="399"/><line x1="60.8" y1="424" x2="60.8" y2="725"/></g><g fill="#f27080"><polygon points="60.8,94.8 57.2,101.2 60.8,99.6 64.4,101.2"/><polygon points="60.8,729 57.2,722.6 60.8,724.2 64.4,722.6"/><polygon points="94.5,64.5 100,61.5 100,67.5"/></g><text x="0" y="0" transform="translate(63,411.5) rotate(-90)" font-family="Liberation Sans" font-size="4.5" fill="#f27080" text-anchor="middle">226 mm</text><g stroke="#f00000" stroke-width="1.05" fill="none"><line x1="67" y1="94.5" x2="89" y2="94.5"/><line x1="94.5" y1="69.5" x2="94.5" y2="88.5"/><line x1="67" y1="729.5" x2="89" y2="729.5"/><line x1="94.5" y1="735.3" x2="94.5" y2="756"/><line x1="67" y1="412.5" x2="88.5" y2="412.5"/><line x1="77.5" y1="401.5" x2="77.5" y2="422.8"/></g><g stroke="#fff" fill="none" stroke-width="4.8"><circle cx="375.5" cy="246" r="41.8"/><line x1="316" y1="245.5" x2="333.5" y2="245.5"/><line x1="417.5" y1="245.5" x2="434.5" y2="245.5"/></g></svg><div style="left:243.00px;top:323.30px;width:134.00px;height:74.50px;background:#ff0000;border-radius:5px"></div><div style="left:244.10px;top:333.40px;width:131.80px;height:63.30px;background:#c0c0c0;border-radius:4px"></div><span class="t" style="left:286.50px;top:325.03px;font-size:8px;line-height:8px;color:#ff0000;transform:scaleX(0.9420);transform-origin:0 0;">INGREDIENTS</span><span class="t" style="left:247.00px;top:335.80px;font-size:5.2px;line-height:5.2px;color:#ff0000;transform:scaleX(0.9375);transform-origin:0 0;">Wheat Flour, Tomato Chilli Sauce (21%) [Tomato Purée</span><span class="t" style="left:247.00px;top:341.79px;font-size:5.2px;line-height:5.2px;color:#ff0000;transform:scaleX(0.9316);transform-origin:0 0;">(80%), Water, Sugar, Onion, Sunflower Oil, Wheat Flour,</span><span class="t" style="left:247.00px;top:347.78px;font-size:5.2px;line-height:5.2px;color:#ff0000;transform:scaleX(0.9311);transform-origin:0 0;">White Wine Vinegar, Salt, Chilli Pepper, Black Pepper,</span><span class="t" style="left:247.00px;top:353.77px;font-size:5.2px;line-height:5.2px;color:#ff0000;transform:scaleX(0.9232);transform-origin:0 0;">Garlic, Basil], Mozzarella Cheese (17%), Cooked Seasoned</span><span class="t" style="left:247.00px;top:359.76px;font-size:5.2px;line-height:5.2px;color:#ff0000;transform:scaleX(0.9351);transform-origin:0 0;">Sweet Chicken Breast (10%) [Chicken Breast (96%),</span><span class="t" style="left:247.00px;top:365.75px;font-size:5.2px;line-height:5.2px;color:#ff0000;transform:scaleX(0.9324);transform-origin:0 0;">Maize Starch, Iodised Salt [contains Potassium Iodine],</span><span class="t" style="left:247.00px;top:371.74px;font-size:5.2px;line-height:5.2px;color:#ff0000;transform:scaleX(0.9358);transform-origin:0 0;">Dextrose, Paprika], Water, Red Onion (4.1%), Spinach</span><span class="t" style="left:247.00px;top:377.73px;font-size:5.2px;line-height:5.2px;color:#ff0000;transform:scaleX(0.9373);transform-origin:0 0;">(4.5%), Red Pepper (2.8%), Sunflower Oil, Milk Protein,</span><span class="t" style="left:247.00px;top:383.72px;font-size:5.2px;line-height:5.2px;color:#ff0000;transform:scaleX(0.9409);transform-origin:0 0;">Yeast, Malted Wheat Flour, Wheat Gluten, Skimmed Milk</span><span class="t" style="left:247.00px;top:389.71px;font-size:5.2px;line-height:5.2px;color:#ff0000;transform:scaleX(0.9307);transform-origin:0 0;">Powder, Salt, Flour Treatment Agent (Ascorbic Acid).</span><div style="left:243.00px;top:401.30px;width:134.00px;height:25.70px;background:#ff0000;border-radius:5px"></div><div style="left:244.10px;top:411.00px;width:131.80px;height:14.90px;background:#c0c0c0;border-radius:4px"></div><span class="t" style="left:279.00px;top:402.53px;font-size:8px;line-height:8px;color:#ff0000;transform:scaleX(0.9497);transform-origin:0 0;">ALLERGY ADVICE!</span><span class="t" style="left:247.00px;top:413.70px;font-size:5.2px;line-height:5.2px;color:#ff0000;transform:scaleX(1.0134);transform-origin:0 0;">• Contains gluten, milk and wheat</span><span class="t" style="left:247.00px;top:419.60px;font-size:5.2px;line-height:5.2px;color:#ff0000;transform:scaleX(1.0213);transform-origin:0 0;">• May contain traces of nuts and/or seeds</span><div style="left:381.80px;top:323.30px;width:134.20px;height:103.70px;background:#ff0000;border-radius:5px"></div><div style="left:382.90px;top:333.40px;width:132.00px;height:92.50px;background:#c0c0c0;border-radius:4px"></div><span class="t" style="left:429.70px;top:325.03px;font-size:8px;line-height:8px;color:#ff0000;transform:scaleX(0.9414);transform-origin:0 0;">NUTRITION</span><div style="left:382.90px;top:347.80px;width:132.00px;height:14.80px;background:#ff0000"></div><div style="left:382.90px;top:371.00px;width:132.00px;height:14.30px;background:#ff0000"></div><div style="left:382.90px;top:402.00px;width:132.00px;height:8.00px;background:#ff0000"></div><div style="left:473.20px;top:334.00px;width:0.90px;height:92.00px;background:#ff0000"></div><span class="t" style="left:386.00px;top:336.54px;font-size:4.8px;line-height:4.8px;color:#ff0000;transform:scaleX(1.0947);transform-origin:0 0;">Typical values</span><span class="t" style="left:386.00px;top:341.74px;font-size:4.8px;line-height:4.8px;color:#ff0000;transform:scaleX(1.0602);transform-origin:0 0;">(oven baked)</span><span class="t" style="left:423.60px;top:336.54px;font-size:4.8px;line-height:4.8px;color:#ff0000;transform:scaleX(1.0883);transform-origin:0 0;">Per 100g</span><span class="t" style="left:453.70px;top:336.54px;font-size:4.8px;line-height:4.8px;color:#ff0000;transform:scaleX(1.0533);transform-origin:0 0;">Per 1/2</span><span class="t" style="left:458.50px;top:341.74px;font-size:4.8px;line-height:4.8px;color:#ff0000;transform:scaleX(1.0977);transform-origin:0 0;">pizza</span><span class="t" style="left:476.40px;top:337.26px;font-size:3px;line-height:3px;color:#ff0000;transform:scaleX(1.1869);transform-origin:0 0;">Guideline daily amounts</span><span class="t" style="left:476.40px;top:340.54px;font-size:4.8px;line-height:4.8px;color:#ff0000;transform:scaleX(1.1186);transform-origin:0 0;">Women</span><span class="t" style="left:503.60px;top:340.54px;font-size:4.8px;line-height:4.8px;color:#ff0000;transform:scaleX(1.1139);transform-origin:0 0;">Men</span><span class="t" style="left:386.00px;top:350.94px;font-size:4.8px;line-height:4.8px;color:#ff0000;">Energy</span><span class="t" style="left:431.59px;top:350.94px;font-size:4.8px;line-height:4.8px;color:#ff0000;">826kJ</span><span class="t" style="left:453.72px;top:350.94px;font-size:4.8px;line-height:4.8px;color:#ff0000;">1740kJ</span><span class="t" style="left:427.86px;top:356.54px;font-size:4.8px;line-height:4.8px;color:#ff0000;">196kcal</span><span class="t" style="left:452.66px;top:356.54px;font-size:4.8px;line-height:4.8px;color:#ff0000;">412kcal</span><span class="t" style="left:482.02px;top:356.54px;font-size:4.8px;line-height:4.8px;color:#ff0000;">2000</span><span class="t" style="left:500.92px;top:356.54px;font-size:4.8px;line-height:4.8px;color:#ff0000;">2500</span><span class="t" style="left:386.00px;top:365.34px;font-size:4.8px;line-height:4.8px;color:#ff0000;">Protein</span><span class="t" style="left:435.06px;top:365.34px;font-size:4.8px;line-height:4.8px;color:#ff0000;">9.3g</span><span class="t" style="left:457.19px;top:365.34px;font-size:4.8px;line-height:4.8px;color:#ff0000;">19.7g</span><span class="t" style="left:484.69px;top:365.34px;font-size:4.8px;line-height:4.8px;color:#ff0000;">45g</span><span class="t" style="left:503.59px;top:365.34px;font-size:4.8px;line-height:4.8px;color:#ff0000;">55g</span><span class="t" style="left:386.00px;top:374.04px;font-size:4.8px;line-height:4.8px;color:#ff0000;">Carbohydrate</span><span class="t" style="left:432.39px;top:374.04px;font-size:4.8px;line-height:4.8px;color:#ff0000;">29.5g</span><span class="t" style="left:457.19px;top:374.04px;font-size:4.8px;line-height:4.8px;color:#ff0000;">62.2g</span><span class="t" style="left:482.02px;top:374.04px;font-size:4.8px;line-height:4.8px;color:#ff0000;">230g</span><span class="t" style="left:500.92px;top:374.04px;font-size:4.8px;line-height:4.8px;color:#ff0000;">300g</span><span class="t" style="left:386.00px;top:379.74px;font-size:4.8px;line-height:4.8px;color:#ff0000;">of which sugars</span><span class="t" style="left:435.06px;top:379.74px;font-size:4.8px;line-height:4.8px;color:#ff0000;">3.5g</span><span class="t" style="left:459.86px;top:379.74px;font-size:4.8px;line-height:4.8px;color:#ff0000;">7.4g</span><span class="t" style="left:484.69px;top:379.74px;font-size:4.8px;line-height:4.8px;color:#ff0000;">90g</span><span class="t" style="left:500.92px;top:379.74px;font-size:4.8px;line-height:4.8px;color:#ff0000;">120g</span><span class="t" style="left:386.00px;top:389.24px;font-size:4.8px;line-height:4.8px;color:#ff0000;">Fat</span><span class="t" style="left:435.06px;top:389.24px;font-size:4.8px;line-height:4.8px;color:#ff0000;">4.5g</span><span class="t" style="left:459.86px;top:389.24px;font-size:4.8px;line-height:4.8px;color:#ff0000;">9.4g</span><span class="t" style="left:484.69px;top:389.24px;font-size:4.8px;line-height:4.8px;color:#ff0000;">70g</span><span class="t" style="left:503.59px;top:389.24px;font-size:4.8px;line-height:4.8px;color:#ff0000;">95g</span><span class="t" style="left:386.00px;top:395.24px;font-size:4.8px;line-height:4.8px;color:#ff0000;">of which saturates</span><span class="t" style="left:435.06px;top:395.24px;font-size:4.8px;line-height:4.8px;color:#ff0000;">1.9g</span><span class="t" style="left:459.86px;top:395.24px;font-size:4.8px;line-height:4.8px;color:#ff0000;">4.1g</span><span class="t" style="left:484.69px;top:395.24px;font-size:4.8px;line-height:4.8px;color:#ff0000;">20g</span><span class="t" style="left:503.59px;top:395.24px;font-size:4.8px;line-height:4.8px;color:#ff0000;">30g</span><span class="t" style="left:386.00px;top:404.14px;font-size:4.8px;line-height:4.8px;color:#ff0000;">Fibre</span><span class="t" style="left:435.06px;top:404.14px;font-size:4.8px;line-height:4.8px;color:#ff0000;">2.3g</span><span class="t" style="left:459.86px;top:404.14px;font-size:4.8px;line-height:4.8px;color:#ff0000;">4.9g</span><span class="t" style="left:484.69px;top:404.14px;font-size:4.8px;line-height:4.8px;color:#ff0000;">24g</span><span class="t" style="left:503.59px;top:404.14px;font-size:4.8px;line-height:4.8px;color:#ff0000;">24g</span><span class="t" style="left:386.00px;top:412.44px;font-size:4.8px;line-height:4.8px;color:#ff0000;">Sodium</span><span class="t" style="left:432.39px;top:412.44px;font-size:4.8px;line-height:4.8px;color:#ff0000;">0.29g</span><span class="t" style="left:457.19px;top:412.44px;font-size:4.8px;line-height:4.8px;color:#ff0000;">0.61g</span><span class="t" style="left:483.36px;top:412.44px;font-size:4.8px;line-height:4.8px;color:#ff0000;">2.4g</span><span class="t" style="left:502.26px;top:412.44px;font-size:4.8px;line-height:4.8px;color:#ff0000;">2.4g</span><span class="t" style="left:386.00px;top:418.54px;font-size:4.8px;line-height:4.8px;color:#ff0000;">equivalent as salt</span><span class="t" style="left:435.06px;top:418.54px;font-size:4.8px;line-height:4.8px;color:#ff0000;">0.7g</span><span class="t" style="left:459.86px;top:418.54px;font-size:4.8px;line-height:4.8px;color:#ff0000;">1.5g</span><span class="t" style="left:487.36px;top:418.54px;font-size:4.8px;line-height:4.8px;color:#ff0000;">6g</span><span class="t" style="left:506.26px;top:418.54px;font-size:4.8px;line-height:4.8px;color:#ff0000;">6g</span><div style="left:243.00px;top:430.30px;width:134.00px;height:81.70px;background:#ff0000;border-radius:5px"></div><div style="left:244.10px;top:440.20px;width:131.80px;height:70.70px;background:#c0c0c0;border-radius:4px"></div><span class="t" style="left:266.70px;top:431.53px;font-size:8px;line-height:8px;color:#ff0000;transform:scaleX(0.9460);transform-origin:0 0;">COOKING INSTRUCTIONS</span><span class="t" style="left:247.00px;top:443.00px;font-size:5.2px;line-height:5.2px;color:#ff0000;transform:scaleX(1.0199);transform-origin:0 0;">We have given you these cooking instructions as a</span><span class="t" style="left:247.00px;top:448.90px;font-size:5.2px;line-height:5.2px;color:#ff0000;transform:scaleX(0.9787);transform-origin:0 0;">guide only</span><span class="t" style="left:247.00px;top:456.47px;font-size:7.6px;line-height:7.6px;color:#ff0000;transform:scaleX(1.0383);transform-origin:0 0;">To Oven Cook</span><span class="t" style="left:247.00px;top:464.60px;font-size:5.2px;line-height:5.2px;color:#ff0000;transform:scaleX(1.0069);transform-origin:0 0;">• Remove all packaging</span><span class="t" style="left:247.00px;top:470.30px;font-size:5.2px;line-height:5.2px;color:#ff0000;transform:scaleX(1.0147);transform-origin:0 0;">• Pre-heat oven and place the pizza onto a baking tray</span><span class="t" style="left:251.00px;top:476.10px;font-size:5.2px;line-height:5.2px;color:#ff0000;transform:scaleX(1.0264);transform-origin:0 0;">on the middle shelf</span><span class="t" style="left:247.00px;top:484.10px;font-size:5.2px;line-height:5.2px;color:#ff0000;transform:scaleX(1.0552);transform-origin:0 0;">From</span><span class="t" style="left:247.00px;top:490.10px;font-size:5.2px;line-height:5.2px;color:#ff0000;transform:scaleX(1.0876);transform-origin:0 0;">Frozen</span><div style="left:266.00px;top:481.80px;width:14.60px;height:14.80px;background:#ff0000;border-radius:1.5px"></div><div style="left:267.60px;top:484.60px;width:11.60px;height:9.40px;border:1.7px solid #ff0000;border-top-width:2.4px;border-radius:1px"></div><div style="left:282.00px;top:481.80px;width:37.70px;height:14.80px;background:#ff0000"></div><span class="t" style="left:285.80px;top:485.21px;font-size:4.6px;line-height:4.6px;color:#ff0000;transform:scaleX(1.0348);transform-origin:0 0;">200°C / 180°F</span><span class="t" style="left:294.80px;top:491.21px;font-size:4.6px;line-height:4.6px;color:#ff0000;transform:scaleX(0.9778);transform-origin:0 0;">Gas 6</span><div style="left:321.30px;top:481.80px;width:40.80px;height:14.80px;background:#ff0000;border-radius:2px"></div><span class="t" style="left:324.50px;top:486.06px;font-size:9.5px;line-height:9.5px;color:#ff0000;transform:scaleX(0.8232);transform-origin:0 0;">10-12</span><span class="t" style="left:347.50px;top:490.21px;font-size:4.6px;line-height:4.6px;color:#ff0000;transform:scaleX(1.1326);transform-origin:0 0;">mins</span><span class="t" style="left:247.00px;top:498.90px;font-size:5.2px;line-height:5.2px;color:#ff0000;transform:scaleX(1.0141);transform-origin:0 0;">• Check product is piping hot before serving</span><span class="t" style="left:247.00px;top:504.90px;font-size:5.2px;line-height:5.2px;color:#ff0000;transform:scaleX(0.9862);transform-origin:0 0;">• Do not re-heat</span><div style="left:381.80px;top:430.30px;width:134.20px;height:81.70px;background:#ff0000;border-radius:5px"></div><div style="left:382.90px;top:440.20px;width:132.00px;height:70.70px;background:#c0c0c0;border-radius:4px"></div><span class="t" style="left:433.00px;top:431.53px;font-size:8px;line-height:8px;color:#ff0000;transform:scaleX(0.9417);transform-origin:0 0;">STORAGE</span><span class="t" style="left:386.10px;top:443.00px;font-size:5.2px;line-height:5.2px;color:#ff0000;transform:scaleX(1.0222);transform-origin:0 0;">• Keep frozen</span><span class="t" style="left:386.10px;top:448.40px;font-size:5.2px;line-height:5.2px;color:#ff0000;">For star marked freezers:</span><div style="left:385.30px;top:454.90px;width:127.70px;height:0.90px;background:#ff0000"></div><div style="left:385.30px;top:464.50px;width:127.70px;height:0.90px;background:#ff0000"></div><div style="left:385.30px;top:474.40px;width:127.70px;height:0.90px;background:#ff0000"></div><div style="left:385.30px;top:484.00px;width:127.70px;height:0.90px;background:#ff0000"></div><div style="left:385.30px;top:494.00px;width:127.70px;height:0.90px;background:#ff0000"></div><svg style="left:380px;top:440px" width="40" height="60" viewBox="0 0 40 60"><g fill="#ff0000"><polygon points="11.20,17.20 12.02,19.17 14.15,19.34 12.53,20.73 13.02,22.81 11.20,21.70 9.38,22.81 9.87,20.73 8.25,19.34 10.38,19.17"/><polygon points="11.20,26.90 12.02,28.87 14.15,29.04 12.53,30.43 13.02,32.51 11.20,31.39 9.38,32.51 9.87,30.43 8.25,29.04 10.38,28.87"/><polygon points="19.50,26.90 20.32,28.87 22.45,29.04 20.83,30.43 21.32,32.51 19.50,31.39 17.68,32.51 18.17,30.43 16.55,29.04 18.68,28.87"/><polygon points="11.20,36.60 12.02,38.57 14.15,38.74 12.53,40.13 13.02,42.21 11.20,41.09 9.38,42.21 9.87,40.13 8.25,38.74 10.38,38.57"/><polygon points="19.50,36.60 20.32,38.57 22.45,38.74 20.83,40.13 21.32,42.21 19.50,41.09 17.68,42.21 18.17,40.13 16.55,38.74 18.68,38.57"/><polygon points="27.80,36.60 28.62,38.57 30.75,38.74 29.13,40.13 29.62,42.21 27.80,41.09 25.98,42.21 26.47,40.13 24.85,38.74 26.98,38.57"/><polygon points="19.50,46.30 20.32,48.27 22.45,48.44 20.83,49.83 21.32,51.91 19.50,50.80 17.68,51.91 18.17,49.83 16.55,48.44 18.68,48.27"/><polygon points="27.80,46.30 28.62,48.27 30.75,48.44 29.13,49.83 29.62,51.91 27.80,50.80 25.98,51.91 26.47,49.83 24.85,48.44 26.98,48.27"/><polygon points="36.10,46.30 36.92,48.27 39.05,48.44 37.43,49.83 37.92,51.91 36.10,50.80 34.28,51.91 34.77,49.83 33.15,48.44 35.28,48.27"/></g><circle cx="11.199999999999989" cy="49.400000000000034" r="3.1" fill="#ff0000"/></svg><span class="t" style="left:462.00px;top:458.20px;font-size:5.2px;line-height:5.2px;color:#ff0000;">Up to 1 week</span><span class="t" style="left:462.00px;top:468.00px;font-size:5.2px;line-height:5.2px;color:#ff0000;transform:scaleX(1.0196);transform-origin:0 0;">Up to 1 month</span><span class="t" style="left:422.80px;top:477.70px;font-size:5.2px;line-height:5.2px;color:#ff0000;transform:scaleX(1.0231);transform-origin:0 0;">(-18°C)</span><span class="t" style="left:462.00px;top:477.70px;font-size:5.2px;line-height:5.2px;color:#ff0000;transform:scaleX(1.0125);transform-origin:0 0;">Up to 3 months</span><span class="t" style="left:422.80px;top:487.30px;font-size:5.2px;line-height:5.2px;color:#ff0000;transform:scaleX(1.0231);transform-origin:0 0;">(-18°C)</span><span class="t" style="left:462.00px;top:487.30px;font-size:5.2px;line-height:5.2px;color:#ff0000;transform:scaleX(1.0122);transform-origin:0 0;">Until Best Before date</span><span class="t" style="left:386.10px;top:498.10px;font-size:5.2px;line-height:5.2px;color:#ff0000;transform:scaleX(1.0130);transform-origin:0 0;">• Do not keep after the Best Before date</span><span class="t" style="left:386.10px;top:504.10px;font-size:5.2px;line-height:5.2px;color:#ff0000;">• Do not re-freeze</span><div style="left:243.00px;top:515.00px;width:273.00px;height:115.00px;border:1.1px solid #ff0000;border-radius:6px"></div><div style="left:247.00px;top:518.80px;width:265.00px;height:39.20px;background:#ff0000;border-radius:5px"></div><div style="left:248.10px;top:528.40px;width:262.80px;height:28.50px;background:#c0c0c0;border-radius:4px"></div><span class="t" style="left:361.90px;top:519.73px;font-size:8px;line-height:8px;color:#ff0000;transform:scaleX(0.9300);transform-origin:0 0;">GUARANTEE</span><span class="t" style="left:251.00px;top:531.15px;font-size:6.2px;line-height:6.2px;color:#ff0000;transform:scaleX(1.0140);transform-origin:0 0;">We will refund and replace this product if you are not 100% happy</span><span class="t" style="left:251.00px;top:538.91px;font-size:4.6px;line-height:4.6px;color:#ff0000;transform:scaleX(1.0219);transform-origin:0 0;">phone us on: 01274 203 703 or visit our website: www.sunlondon.com</span><span class="t" style="left:251.00px;top:545.53px;font-size:2.8px;line-height:2.8px;color:#ff0000;transform:scaleX(1.2855);transform-origin:0 0;">When calling or writing please quote the code &quot;SN&quot; and the date from the Best Before box</span><span class="t" style="left:251.00px;top:550.40px;font-size:5.2px;line-height:5.2px;color:#ff0000;transform:scaleX(0.9680);transform-origin:0 0;">Produced in the U.K. for Sun Branding Solutions, Bradford BD10 8TQ</span><div style="left:247.00px;top:560.80px;width:130.00px;height:65.20px;background:#ff0000;border-radius:5px"></div><div style="left:248.10px;top:570.40px;width:127.80px;height:54.50px;background:#c0c0c0;border-radius:4px"></div><span class="t" style="left:296.90px;top:562.43px;font-size:8px;line-height:8px;color:#ff0000;transform:scaleX(0.9246);transform-origin:0 0;">DISPOSAL</span><div style="left:249.90px;top:573.00px;width:123.90px;height:21.70px;border:1.1px solid #ff0000;border-radius:0px"></div><div style="left:250.50px;top:573.60px;width:50.40px;height:20.50px;background:#ff0000"></div><div style="left:300.40px;top:573.60px;width:1.00px;height:20.50px;background:#ff0000"></div><div style="left:249.90px;top:599.20px;width:123.90px;height:21.40px;border:1.1px solid #ff0000;border-radius:0px"></div><div style="left:250.50px;top:599.80px;width:50.40px;height:20.20px;background:#dd8a8a"></div><div style="left:300.40px;top:599.80px;width:1.00px;height:20.20px;background:#ff0000"></div><svg style="left:250px;top:573px" width="52" height="48" viewBox="0 0 52 48"><path d="M11.68,7.91 A4.8,4.8 0 1 0 11.93,13.75" fill="none" stroke="#ff0000" stroke-width="1.5"/><rect x="12.50" y="9.10" width="3.6" height="3.6" transform="rotate(45 14.30 10.90)" fill="#ff0000"/><path d="M13.78,33.06 A5.2,5.2 0 1 0 14.06,39.38" fill="none" stroke="#ff0000" stroke-width="1.5"/><rect x="14.70" y="34.50" width="3.6" height="3.6" transform="rotate(45 16.50 36.30)" fill="#ff0000"/><line x1="0.6" y1="47" x2="20" y2="26.3" stroke="#ff0000" stroke-width="1.8"/></svg><span class="t" style="left:271.00px;top:582.21px;font-size:4.6px;line-height:4.6px;color:#ff0000;transform:scaleX(0.9779);transform-origin:0 0;">BOX</span><span class="t" style="left:271.00px;top:608.21px;font-size:4.6px;line-height:4.6px;color:#ff0000;transform:scaleX(1.0499);transform-origin:0 0;">FILM</span><span class="t" style="left:303.00px;top:579.27px;font-size:5px;line-height:5px;color:#ff0000;transform:scaleX(1.0186);transform-origin:0 0;">CARD widely</span><span class="t" style="left:303.00px;top:584.87px;font-size:5px;line-height:5px;color:#ff0000;transform:scaleX(1.0474);transform-origin:0 0;">recycled</span><span class="t" style="left:303.00px;top:604.87px;font-size:5px;line-height:5px;color:#ff0000;transform:scaleX(0.9253);transform-origin:0 0;">PLASTIC not</span><span class="t" style="left:303.00px;top:610.47px;font-size:5px;line-height:5px;color:#ff0000;transform:scaleX(1.0593);transform-origin:0 0;">currently recycled</span><svg style="left:383.7px;top:560.4px" width="37.5" height="37.5" viewBox="0 0 37.5 37.5"><rect width="37.5" height="37.5" fill="#ff0000"/><g fill="#c0c0c0"><rect x="1.39" y="1.39" width="1.44" height="1.44"/><rect x="2.78" y="1.39" width="1.44" height="1.44"/><rect x="4.17" y="1.39" width="1.44" height="1.44"/><rect x="5.56" y="1.39" width="1.44" height="1.44"/><rect x="6.94" y="1.39" width="1.44" height="1.44"/><rect x="8.33" y="1.39" width="1.44" height="1.44"/><rect x="9.72" y="1.39" width="1.44" height="1.44"/><rect x="12.50" y="1.39" width="1.44" height="1.44"/><rect x="13.89" y="1.39" width="1.44" height="1.44"/><rect x="15.28" y="1.39" width="1.44" height="1.44"/><rect x="16.67" y="1.39" width="1.44" height="1.44"/><rect x="18.06" y="1.39" width="1.44" height="1.44"/><rect x="20.83" y="1.39" width="1.44" height="1.44"/><rect x="22.22" y="1.39" width="1.44" height="1.44"/><rect x="26.39" y="1.39" width="1.44" height="1.44"/><rect x="27.78" y="1.39" width="1.44" height="1.44"/><rect x="29.17" y="1.39" width="1.44" height="1.44"/><rect x="30.56" y="1.39" width="1.44" height="1.44"/><rect x="31.94" y="1.39" width="1.44" height="1.44"/><rect x="33.33" y="1.39" width="1.44" height="1.44"/><rect x="34.72" y="1.39" width="1.44" height="1.44"/><rect x="1.39" y="2.78" width="1.44" height="1.44"/><rect x="9.72" y="2.78" width="1.44" height="1.44"/><rect x="12.50" y="2.78" width="1.44" height="1.44"/><rect x="13.89" y="2.78" width="1.44" height="1.44"/><rect x="15.28" y="2.78" width="1.44" height="1.44"/><rect x="18.06" y="2.78" width="1.44" height="1.44"/><rect x="19.44" y="2.78" width="1.44" height="1.44"/><rect x="22.22" y="2.78" width="1.44" height="1.44"/><rect x="23.61" y="2.78" width="1.44" height="1.44"/><rect x="26.39" y="2.78" width="1.44" height="1.44"/><rect x="34.72" y="2.78" width="1.44" height="1.44"/><rect x="1.39" y="4.17" width="1.44" height="1.44"/><rect x="4.17" y="4.17" width="1.44" height="1.44"/><rect x="5.56" y="4.17" width="1.44" height="1.44"/><rect x="6.94" y="4.17" width="1.44" height="1.44"/><rect x="9.72" y="4.17" width="1.44" height="1.44"/><rect x="16.67" y="4.17" width="1.44" height="1.44"/><rect x="22.22" y="4.17" width="1.44" height="1.44"/><rect x="26.39" y="4.17" width="1.44" height="1.44"/><rect x="29.17" y="4.17" width="1.44" height="1.44"/><rect x="30.56" y="4.17" width="1.44" height="1.44"/><rect x="31.94" y="4.17" width="1.44" height="1.44"/><rect x="34.72" y="4.17" width="1.44" height="1.44"/><rect x="1.39" y="5.56" width="1.44" height="1.44"/><rect x="4.17" y="5.56" width="1.44" height="1.44"/><rect x="5.56" y="5.56" width="1.44" height="1.44"/><rect x="6.94" y="5.56" width="1.44" height="1.44"/><rect x="9.72" y="5.56" width="1.44" height="1.44"/><rect x="13.89" y="5.56" width="1.44" height="1.44"/><rect x="15.28" y="5.56" width="1.44" height="1.44"/><rect x="16.67" y="5.56" width="1.44" height="1.44"/><rect x="19.44" y="5.56" width="1.44" height="1.44"/><rect x="20.83" y="5.56" width="1.44" height="1.44"/><rect x="26.39" y="5.56" width="1.44" height="1.44"/><rect x="29.17" y="5.56" width="1.44" height="1.44"/><rect x="30.56" y="5.56" width="1.44" height="1.44"/><rect x="31.94" y="5.56" width="1.44" height="1.44"/><rect x="34.72" y="5.56" width="1.44" height="1.44"/><rect x="1.39" y="6.94" width="1.44" height="1.44"/><rect x="4.17" y="6.94" width="1.44" height="1.44"/><rect x="5.56" y="6.94" width="1.44" height="1.44"/><rect x="6.94" y="6.94" width="1.44" height="1.44"/><rect x="9.72" y="6.94" width="1.44" height="1.44"/><rect x="12.50" y="6.94" width="1.44" height="1.44"/><rect x="22.22" y="6.94" width="1.44" height="1.44"/><rect x="26.39" y="6.94" width="1.44" height="1.44"/><rect x="29.17" y="6.94" width="1.44" height="1.44"/><rect x="30.56" y="6.94" width="1.44" height="1.44"/><rect x="31.94" y="6.94" width="1.44" height="1.44"/><rect x="34.72" y="6.94" width="1.44" height="1.44"/><rect x="1.39" y="8.33" width="1.44" height="1.44"/><rect x="9.72" y="8.33" width="1.44" height="1.44"/><rect x="12.50" y="8.33" width="1.44" height="1.44"/><rect x="13.89" y="8.33" width="1.44" height="1.44"/><rect x="18.06" y="8.33" width="1.44" height="1.44"/><rect x="19.44" y="8.33" width="1.44" height="1.44"/><rect x="20.83" y="8.33" width="1.44" height="1.44"/><rect x="22.22" y="8.33" width="1.44" height="1.44"/><rect x="23.61" y="8.33" width="1.44" height="1.44"/><rect x="26.39" y="8.33" width="1.44" height="1.44"/><rect x="34.72" y="8.33" width="1.44" height="1.44"/><rect x="1.39" y="9.72" width="1.44" height="1.44"/><rect x="2.78" y="9.72" width="1.44" height="1.44"/><rect x="4.17" y="9.72" width="1.44" height="1.44"/><rect x="5.56" y="9.72" width="1.44" height="1.44"/><rect x="6.94" y="9.72" width="1.44" height="1.44"/><rect x="8.33" y="9.72" width="1.44" height="1.44"/><rect x="9.72" y="9.72" width="1.44" height="1.44"/><rect x="18.06" y="9.72" width="1.44" height="1.44"/><rect x="19.44" y="9.72" width="1.44" height="1.44"/><rect x="20.83" y="9.72" width="1.44" height="1.44"/><rect x="26.39" y="9.72" width="1.44" height="1.44"/><rect x="27.78" y="9.72" width="1.44" height="1.44"/><rect x="29.17" y="9.72" width="1.44" height="1.44"/><rect x="30.56" y="9.72" width="1.44" height="1.44"/><rect x="31.94" y="9.72" width="1.44" height="1.44"/><rect x="33.33" y="9.72" width="1.44" height="1.44"/><rect x="34.72" y="9.72" width="1.44" height="1.44"/><rect x="15.28" y="11.11" width="1.44" height="1.44"/><rect x="20.83" y="11.11" width="1.44" height="1.44"/><rect x="22.22" y="11.11" width="1.44" height="1.44"/><rect x="23.61" y="11.11" width="1.44" height="1.44"/><rect x="1.39" y="12.50" width="1.44" height="1.44"/><rect x="8.33" y="12.50" width="1.44" height="1.44"/><rect x="9.72" y="12.50" width="1.44" height="1.44"/><rect x="12.50" y="12.50" width="1.44" height="1.44"/><rect x="16.67" y="12.50" width="1.44" height="1.44"/><rect x="18.06" y="12.50" width="1.44" height="1.44"/><rect x="22.22" y="12.50" width="1.44" height="1.44"/><rect x="23.61" y="12.50" width="1.44" height="1.44"/><rect x="25.00" y="12.50" width="1.44" height="1.44"/><rect x="29.17" y="12.50" width="1.44" height="1.44"/><rect x="34.72" y="12.50" width="1.44" height="1.44"/><rect x="2.78" y="13.89" width="1.44" height="1.44"/><rect x="4.17" y="13.89" width="1.44" height="1.44"/><rect x="11.11" y="13.89" width="1.44" height="1.44"/><rect x="15.28" y="13.89" width="1.44" height="1.44"/><rect x="16.67" y="13.89" width="1.44" height="1.44"/><rect x="18.06" y="13.89" width="1.44" height="1.44"/><rect x="19.44" y="13.89" width="1.44" height="1.44"/><rect x="22.22" y="13.89" width="1.44" height="1.44"/><rect x="23.61" y="13.89" width="1.44" height="1.44"/><rect x="25.00" y="13.89" width="1.44" height="1.44"/><rect x="27.78" y="13.89" width="1.44" height="1.44"/><rect x="29.17" y="13.89" width="1.44" height="1.44"/><rect x="33.33" y="13.89" width="1.44" height="1.44"/><rect x="5.56" y="15.28" width="1.44" height="1.44"/><rect x="6.94" y="15.28" width="1.44" height="1.44"/><rect x="8.33" y="15.28" width="1.44" height="1.44"/><rect x="9.72" y="15.28" width="1.44" height="1.44"/><rect x="12.50" y="15.28" width="1.44" height="1.44"/><rect x="13.89" y="15.28" width="1.44" height="1.44"/><rect x="18.06" y="15.28" width="1.44" height="1.44"/><rect x="23.61" y="15.28" width="1.44" height="1.44"/><rect x="26.39" y="15.28" width="1.44" height="1.44"/><rect x="27.78" y="15.28" width="1.44" height="1.44"/><rect x="1.39" y="16.67" width="1.44" height="1.44"/><rect x="8.33" y="16.67" width="1.44" height="1.44"/><rect x="11.11" y="16.67" width="1.44" height="1.44"/><rect x="18.06" y="16.67" width="1.44" height="1.44"/><rect x="23.61" y="16.67" width="1.44" height="1.44"/><rect x="25.00" y="16.67" width="1.44" height="1.44"/><rect x="26.39" y="16.67" width="1.44" height="1.44"/><rect x="27.78" y="16.67" width="1.44" height="1.44"/><rect x="29.17" y="16.67" width="1.44" height="1.44"/><rect x="30.56" y="16.67" width="1.44" height="1.44"/><rect x="1.39" y="18.06" width="1.44" height="1.44"/><rect x="5.56" y="18.06" width="1.44" height="1.44"/><rect x="9.72" y="18.06" width="1.44" height="1.44"/><rect x="12.50" y="18.06" width="1.44" height="1.44"/><rect x="13.89" y="18.06" width="1.44" height="1.44"/><rect x="18.06" y="18.06" width="1.44" height="1.44"/><rect x="19.44" y="18.06" width="1.44" height="1.44"/><rect x="22.22" y="18.06" width="1.44" height="1.44"/><rect x="23.61" y="18.06" width="1.44" height="1.44"/><rect x="25.00" y="18.06" width="1.44" height="1.44"/><rect x="27.78" y="18.06" width="1.44" height="1.44"/><rect x="30.56" y="18.06" width="1.44" height="1.44"/><rect x="31.94" y="18.06" width="1.44" height="1.44"/><rect x="33.33" y="18.06" width="1.44" height="1.44"/><rect x="2.78" y="19.44" width="1.44" height="1.44"/><rect x="8.33" y="19.44" width="1.44" height="1.44"/><rect x="9.72" y="19.44" width="1.44" height="1.44"/><rect x="11.11" y="19.44" width="1.44" height="1.44"/><rect x="13.89" y="19.44" width="1.44" height="1.44"/><rect x="15.28" y="19.44" width="1.44" height="1.44"/><rect x="16.67" y="19.44" width="1.44" height="1.44"/><rect x="20.83" y="19.44" width="1.44" height="1.44"/><rect x="22.22" y="19.44" width="1.44" height="1.44"/><rect x="27.78" y="19.44" width="1.44" height="1.44"/><rect x="29.17" y="19.44" width="1.44" height="1.44"/><rect x="31.94" y="19.44" width="1.44" height="1.44"/><rect x="33.33" y="19.44" width="1.44" height="1.44"/><rect x="4.17" y="20.83" width="1.44" height="1.44"/><rect x="6.94" y="20.83" width="1.44" height="1.44"/><rect x="9.72" y="20.83" width="1.44" height="1.44"/><rect x="11.11" y="20.83" width="1.44" height="1.44"/><rect x="15.28" y="20.83" width="1.44" height="1.44"/><rect x="16.67" y="20.83" width="1.44" height="1.44"/><rect x="19.44" y="20.83" width="1.44" height="1.44"/><rect x="20.83" y="20.83" width="1.44" height="1.44"/><rect x="22.22" y="20.83" width="1.44" height="1.44"/><rect x="23.61" y="20.83" width="1.44" height="1.44"/><rect x="25.00" y="20.83" width="1.44" height="1.44"/><rect x="26.39" y="20.83" width="1.44" height="1.44"/><rect x="27.78" y="20.83" width="1.44" height="1.44"/><rect x="30.56" y="20.83" width="1.44" height="1.44"/><rect x="33.33" y="20.83" width="1.44" height="1.44"/><rect x="34.72" y="20.83" width="1.44" height="1.44"/><rect x="1.39" y="22.22" width="1.44" height="1.44"/><rect x="2.78" y="22.22" width="1.44" height="1.44"/><rect x="4.17" y="22.22" width="1.44" height="1.44"/><rect x="8.33" y="22.22" width="1.44" height="1.44"/><rect x="9.72" y="22.22" width="1.44" height="1.44"/><rect x="12.50" y="22.22" width="1.44" height="1.44"/><rect x="15.28" y="22.22" width="1.44" height="1.44"/><rect x="16.67" y="22.22" width="1.44" height="1.44"/><rect x="19.44" y="22.22" width="1.44" height="1.44"/><rect x="25.00" y="22.22" width="1.44" height="1.44"/><rect x="30.56" y="22.22" width="1.44" height="1.44"/><rect x="31.94" y="22.22" width="1.44" height="1.44"/><rect x="33.33" y="22.22" width="1.44" height="1.44"/><rect x="34.72" y="22.22" width="1.44" height="1.44"/><rect x="1.39" y="23.61" width="1.44" height="1.44"/><rect x="4.17" y="23.61" width="1.44" height="1.44"/><rect x="5.56" y="23.61" width="1.44" height="1.44"/><rect x="6.94" y="23.61" width="1.44" height="1.44"/><rect x="12.50" y="23.61" width="1.44" height="1.44"/><rect x="13.89" y="23.61" width="1.44" height="1.44"/><rect x="15.28" y="23.61" width="1.44" height="1.44"/><rect x="16.67" y="23.61" width="1.44" height="1.44"/><rect x="18.06" y="23.61" width="1.44" height="1.44"/><rect x="19.44" y="23.61" width="1.44" height="1.44"/><rect x="20.83" y="23.61" width="1.44" height="1.44"/><rect x="26.39" y="23.61" width="1.44" height="1.44"/><rect x="29.17" y="23.61" width="1.44" height="1.44"/><rect x="30.56" y="23.61" width="1.44" height="1.44"/><rect x="31.94" y="23.61" width="1.44" height="1.44"/><rect x="33.33" y="23.61" width="1.44" height="1.44"/><rect x="34.72" y="23.61" width="1.44" height="1.44"/><rect x="12.50" y="25.00" width="1.44" height="1.44"/><rect x="13.89" y="25.00" width="1.44" height="1.44"/><rect x="15.28" y="25.00" width="1.44" height="1.44"/><rect x="25.00" y="25.00" width="1.44" height="1.44"/><rect x="26.39" y="25.00" width="1.44" height="1.44"/><rect x="29.17" y="25.00" width="1.44" height="1.44"/><rect x="33.33" y="25.00" width="1.44" height="1.44"/><rect x="1.39" y="26.39" width="1.44" height="1.44"/><rect x="2.78" y="26.39" width="1.44" height="1.44"/><rect x="4.17" y="26.39" width="1.44" height="1.44"/><rect x="5.56" y="26.39" width="1.44" height="1.44"/><rect x="6.94" y="26.39" width="1.44" height="1.44"/><rect x="8.33" y="26.39" width="1.44" height="1.44"/><rect x="9.72" y="26.39" width="1.44" height="1.44"/><rect x="20.83" y="26.39" width="1.44" height="1.44"/><rect x="22.22" y="26.39" width="1.44" height="1.44"/><rect x="23.61" y="26.39" width="1.44" height="1.44"/><rect x="25.00" y="26.39" width="1.44" height="1.44"/><rect x="26.39" y="26.39" width="1.44" height="1.44"/><rect x="34.72" y="26.39" width="1.44" height="1.44"/><rect x="1.39" y="27.78" width="1.44" height="1.44"/><rect x="9.72" y="27.78" width="1.44" height="1.44"/><rect x="12.50" y="27.78" width="1.44" height="1.44"/><rect x="13.89" y="27.78" width="1.44" height="1.44"/><rect x="15.28" y="27.78" width="1.44" height="1.44"/><rect x="18.06" y="27.78" width="1.44" height="1.44"/><rect x="22.22" y="27.78" width="1.44" height="1.44"/><rect x="23.61" y="27.78" width="1.44" height="1.44"/><rect x="25.00" y="27.78" width="1.44" height="1.44"/><rect x="31.94" y="27.78" width="1.44" height="1.44"/><rect x="33.33" y="27.78" width="1.44" height="1.44"/><rect x="34.72" y="27.78" width="1.44" height="1.44"/><rect x="1.39" y="29.17" width="1.44" height="1.44"/><rect x="4.17" y="29.17" width="1.44" height="1.44"/><rect x="5.56" y="29.17" width="1.44" height="1.44"/><rect x="6.94" y="29.17" width="1.44" height="1.44"/><rect x="9.72" y="29.17" width="1.44" height="1.44"/><rect x="13.89" y="29.17" width="1.44" height="1.44"/><rect x="16.67" y="29.17" width="1.44" height="1.44"/><rect x="18.06" y="29.17" width="1.44" height="1.44"/><rect x="19.44" y="29.17" width="1.44" height="1.44"/><rect x="22.22" y="29.17" width="1.44" height="1.44"/><rect x="26.39" y="29.17" width="1.44" height="1.44"/><rect x="27.78" y="29.17" width="1.44" height="1.44"/><rect x="31.94" y="29.17" width="1.44" height="1.44"/><rect x="33.33" y="29.17" width="1.44" height="1.44"/><rect x="34.72" y="29.17" width="1.44" height="1.44"/><rect x="1.39" y="30.56" width="1.44" height="1.44"/><rect x="4.17" y="30.56" width="1.44" height="1.44"/><rect x="5.56" y="30.56" width="1.44" height="1.44"/><rect x="6.94" y="30.56" width="1.44" height="1.44"/><rect x="9.72" y="30.56" width="1.44" height="1.44"/><rect x="16.67" y="30.56" width="1.44" height="1.44"/><rect x="19.44" y="30.56" width="1.44" height="1.44"/><rect x="20.83" y="30.56" width="1.44" height="1.44"/><rect x="22.22" y="30.56" width="1.44" height="1.44"/><rect x="23.61" y="30.56" width="1.44" height="1.44"/><rect x="25.00" y="30.56" width="1.44" height="1.44"/><rect x="26.39" y="30.56" width="1.44" height="1.44"/><rect x="27.78" y="30.56" width="1.44" height="1.44"/><rect x="29.17" y="30.56" width="1.44" height="1.44"/><rect x="30.56" y="30.56" width="1.44" height="1.44"/><rect x="33.33" y="30.56" width="1.44" height="1.44"/><rect x="1.39" y="31.94" width="1.44" height="1.44"/><rect x="4.17" y="31.94" width="1.44" height="1.44"/><rect x="5.56" y="31.94" width="1.44" height="1.44"/><rect x="6.94" y="31.94" width="1.44" height="1.44"/><rect x="9.72" y="31.94" width="1.44" height="1.44"/><rect x="15.28" y="31.94" width="1.44" height="1.44"/><rect x="16.67" y="31.94" width="1.44" height="1.44"/><rect x="18.06" y="31.94" width="1.44" height="1.44"/><rect x="19.44" y="31.94" width="1.44" height="1.44"/><rect x="20.83" y="31.94" width="1.44" height="1.44"/><rect x="23.61" y="31.94" width="1.44" height="1.44"/><rect x="26.39" y="31.94" width="1.44" height="1.44"/><rect x="27.78" y="31.94" width="1.44" height="1.44"/><rect x="30.56" y="31.94" width="1.44" height="1.44"/><rect x="31.94" y="31.94" width="1.44" height="1.44"/><rect x="1.39" y="33.33" width="1.44" height="1.44"/><rect x="9.72" y="33.33" width="1.44" height="1.44"/><rect x="12.50" y="33.33" width="1.44" height="1.44"/><rect x="16.67" y="33.33" width="1.44" height="1.44"/><rect x="18.06" y="33.33" width="1.44" height="1.44"/><rect x="20.83" y="33.33" width="1.44" height="1.44"/><rect x="22.22" y="33.33" width="1.44" height="1.44"/><rect x="23.61" y="33.33" width="1.44" height="1.44"/><rect x="25.00" y="33.33" width="1.44" height="1.44"/><rect x="29.17" y="33.33" width="1.44" height="1.44"/><rect x="31.94" y="33.33" width="1.44" height="1.44"/><rect x="34.72" y="33.33" width="1.44" height="1.44"/><rect x="1.39" y="34.72" width="1.44" height="1.44"/><rect x="2.78" y="34.72" width="1.44" height="1.44"/><rect x="4.17" y="34.72" width="1.44" height="1.44"/><rect x="5.56" y="34.72" width="1.44" height="1.44"/><rect x="6.94" y="34.72" width="1.44" height="1.44"/><rect x="8.33" y="34.72" width="1.44" height="1.44"/><rect x="9.72" y="34.72" width="1.44" height="1.44"/><rect x="12.50" y="34.72" width="1.44" height="1.44"/><rect x="13.89" y="34.72" width="1.44" height="1.44"/><rect x="15.28" y="34.72" width="1.44" height="1.44"/><rect x="16.67" y="34.72" width="1.44" height="1.44"/><rect x="18.06" y="34.72" width="1.44" height="1.44"/><rect x="19.44" y="34.72" width="1.44" height="1.44"/><rect x="20.83" y="34.72" width="1.44" height="1.44"/><rect x="22.22" y="34.72" width="1.44" height="1.44"/><rect x="27.78" y="34.72" width="1.44" height="1.44"/><rect x="29.17" y="34.72" width="1.44" height="1.44"/><rect x="31.94" y="34.72" width="1.44" height="1.44"/><rect x="33.33" y="34.72" width="1.44" height="1.44"/><rect x="34.72" y="34.72" width="1.44" height="1.44"/></g></svg><span class="t" style="left:380.80px;top:602.51px;font-size:4.6px;line-height:4.6px;color:#ff0000;transform:scaleX(1.0451);transform-origin:0 0;">For Best Before,</span><span class="t" style="left:380.80px;top:608.41px;font-size:4.6px;line-height:4.6px;color:#ff0000;transform:scaleX(1.0529);transform-origin:0 0;">see side of pack</span><span class="t" style="left:380.80px;top:615.03px;font-size:10px;line-height:10px;color:#ff0000;transform:scaleX(1.0340);transform-origin:0 0;">425g</span><span class="t" style="left:405.20px;top:613.12px;font-size:12.5px;line-height:12.5px;color:#ff0000;transform:scaleX(1.1464);transform-origin:0 0;">℮</span><svg style="left:427.6px;top:571.2px" width="77.9" height="54.8" viewBox="0 0 77.9 54.8"><rect width="77.9" height="54.8" fill="#ff0000"/></svg><span class="t" style="left:347.00px;top:235.86px;font-size:24.5px;line-height:24.5px;color:#fff;font-weight:bold;letter-spacing:2.4px;-webkit-text-stroke:0.6px #fff;">SUN</span><span class="t" style="left:243.00px;top:302.69px;font-size:7.34px;line-height:7.34px;color:#f4f4f4;">An authentic Italian stonebaked thin and crispy pizza base topped with a sweet chilli</span><span class="t" style="left:243.00px;top:311.79px;font-size:7.34px;line-height:7.34px;color:#f4f4f4;">tomato sauce, creamy mozzarella, cooked seasoned sweet chicken breast and spinach</span>
</div>
<div class="lbl" style="left:10px;top:10px;width:414.7px;height:27px"></div>
<span class="t" style="left:20.70px;top:16.75px;font-size:14px;line-height:14px;color:#f2f2f2;letter-spacing:0.2px;">Pizza ArtW SUN DARK V2.pdf - Pizza ArtW SUN DARK V1.pdf</span>
</div>
<div style="left:1198.00px;top:81.00px;width:5.00px;height:592.00px;background:#7f7f7f"></div>
<div style="left:610.00px;top:800.00px;width:247.00px;height:5.00px;background:#7f7f7f"></div>
<div class="panel" style="left:1211px;top:46px;width:587px;height:750px;box-shadow:0 0 0 1px #2a2a2a">
<div class="inner">
<svg class="pg" width="620" height="800" viewBox="0 0 620 800"><g fill="none" stroke="#f39ad3" stroke-width="1"><polyline points="111.3,152 94.5,157 94.5,667 111.3,672"/><line x1="131" y1="103.5" x2="620" y2="103.5"/><line x1="130.5" y1="720.5" x2="620" y2="720.5"/></g><polygon fill="#020207" points="119.5,96.3 131,96.3 129.8,143.8 620,143.8 620,678.2 130,678.2 130.8,725.8 119,725.8 117.3,681.5 111.2,677 111.2,148.5 117.5,141.5"/><g stroke="#fff" fill="none" stroke-width="4.8"><circle cx="375.5" cy="246" r="41.8"/><line x1="316" y1="245.5" x2="333.5" y2="245.5"/><line x1="417.5" y1="245.5" x2="434.5" y2="245.5"/></g></svg><span class="t" style="left:347.00px;top:235.86px;font-size:24.5px;line-height:24.5px;color:#fff;font-weight:bold;letter-spacing:2.4px;-webkit-text-stroke:0.6px #fff;">SUN</span><span class="t" style="left:243.00px;top:302.69px;font-size:7.34px;line-height:7.34px;color:#d6d6d6;">An authentic Italian stonebaked thin and crispy pizza base topped with a sweet chilli</span><span class="t" style="left:243.00px;top:311.79px;font-size:7.34px;line-height:7.34px;color:#d6d6d6;">tomato sauce, creamy mozzarella, cooked seasoned sweet chicken breast and spinach</span>
</div>
<div class="lbl" style="left:10px;top:10px;width:206.6px;height:27px"></div>
<span class="t" style="left:20.70px;top:16.75px;font-size:14px;line-height:14px;color:#f2f2f2;letter-spacing:0.2px;">Pizza ArtW SUN DARK V1.pdf</span>
</div>
<div style="left:1802.00px;top:81.00px;width:5.00px;height:592.00px;background:#7f7f7f"></div>
<div style="left:1215.00px;top:800.00px;width:247.00px;height:5.00px;background:#7f7f7f"></div>
<div style="left:1209.00px;top:44.00px;width:604.00px;height:766.00px;border:2px solid #ff0000;"></div>
</body></html>
